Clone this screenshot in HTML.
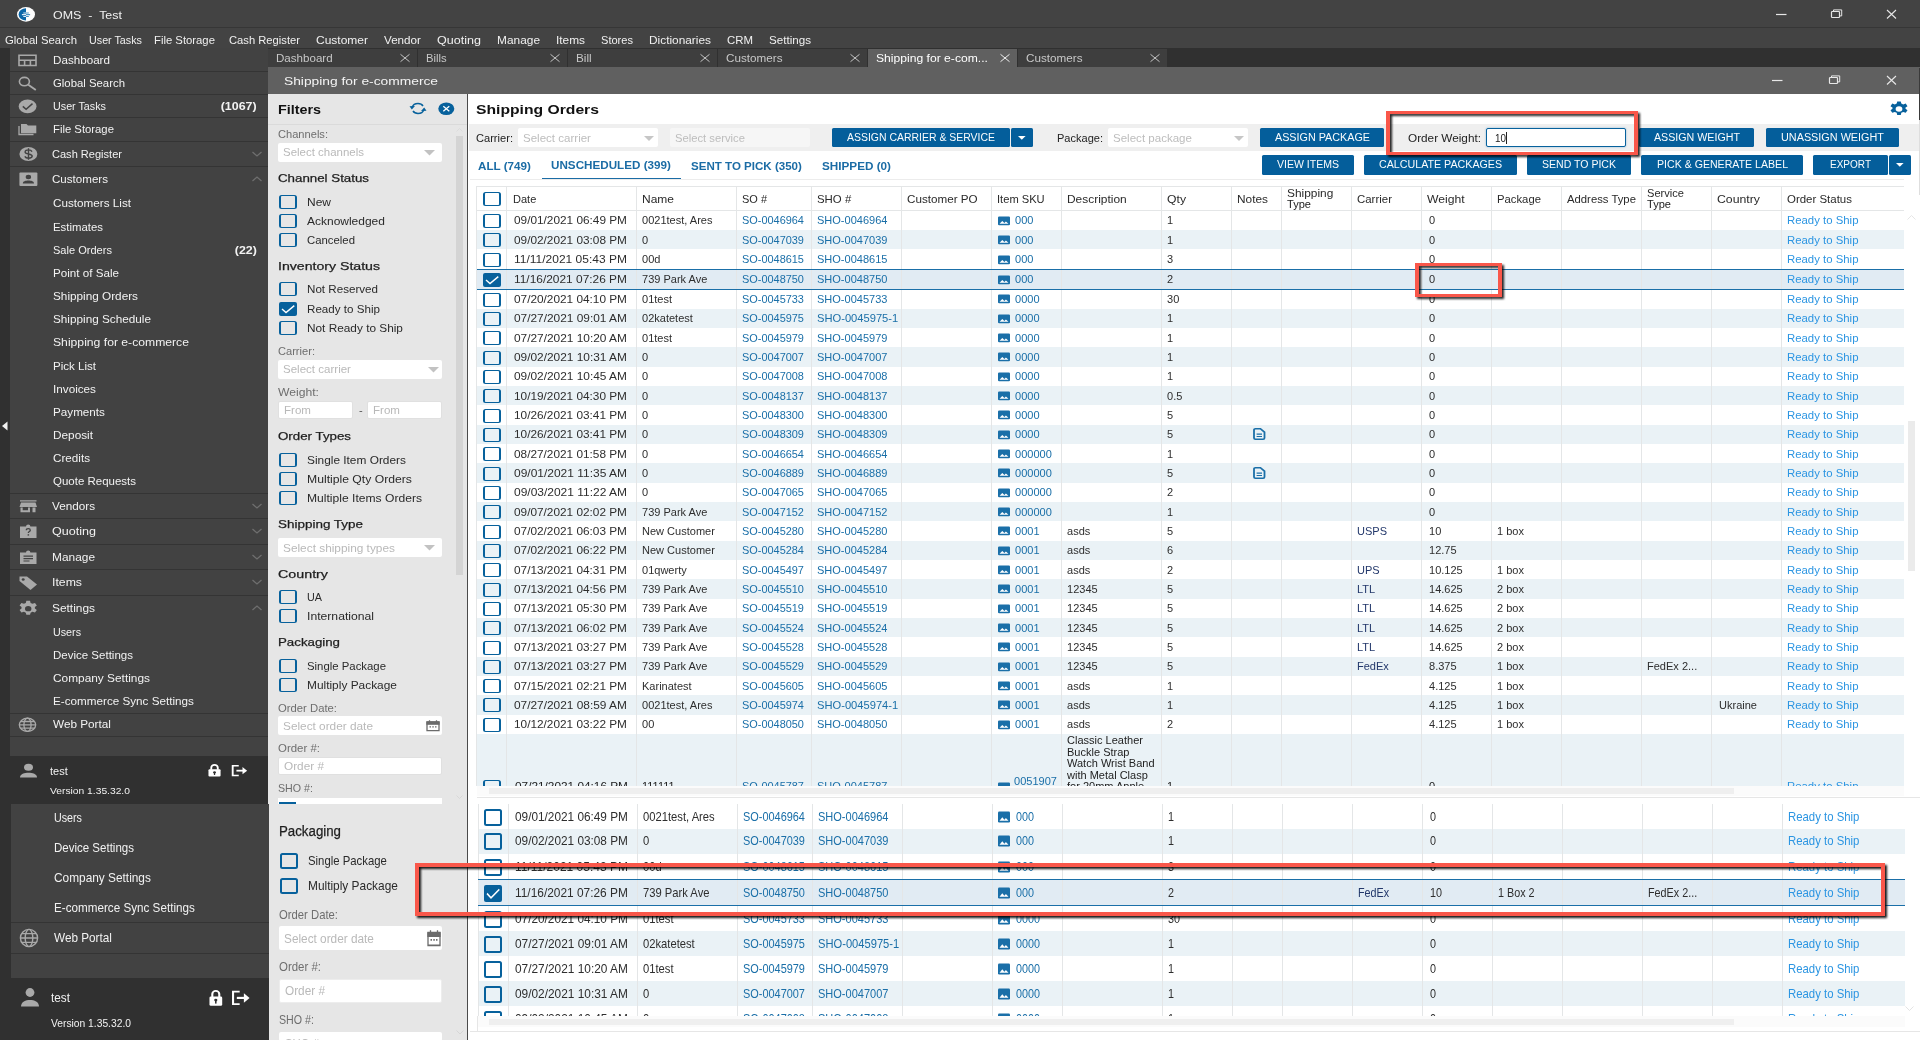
<!DOCTYPE html>
<html><head><meta charset="utf-8"><title>OMS - Test</title>
<style>
html,body{margin:0;padding:0;}
body{width:1920px;height:1040px;overflow:hidden;position:relative;background:#fff;font-family:"Liberation Sans",sans-serif;}
.t{position:absolute;white-space:pre;}
.r{position:absolute;}
svg{position:absolute;overflow:visible;}
.clip{position:absolute;overflow:hidden;}
</style></head><body>
<div id="root" style="position:absolute;left:0;top:0;width:1920px;height:1040px;overflow:hidden;background:#fff">
<div class="r" style="left:0px;top:0px;width:1920px;height:28px;background:#434343;"></div>
<div class="r" style="left:0px;top:27px;width:1920px;height:1px;background:#363636;"></div>
<div class="r" style="left:0px;top:28px;width:1920px;height:20px;background:#434343;"></div>
<div class="r" style="left:0px;top:48px;width:1920px;height:20px;background:#303030;"></div>
<svg style="left:17px;top:6.500px" width="18" height="15" viewBox="0 0 18 15"><ellipse cx="9" cy="7.400" rx="9" ry="7.300" fill="#fdfdfd"/><path d="M9 1.200A7.400 6.200 0 0 0 9 13.600z" fill="#0b66a8"/><path d="M6.300 5.400H9v1.100H6.300z M4.900 7.100H9v1.100H4.900z M6.300 9H9v1.100H6.300z" fill="#dbe9f4"/><path d="M9 5.400h2.800v1.100H9z M9 7.100h4.100v1.100H9z M9 9h2.800v1.100H9z" fill="#4d93c4"/></svg>
<div class="t" style="left:53.0px;top:6.5px;font-size:11.5px;line-height:16px;color:#f0f0f0;transform:scaleX(1.083);transform-origin:0 50%;">OMS  -  Test</div>
<svg style="left:0;top:0" width="1920" height="100"><g stroke="#e6e6e6" fill="none" stroke-width="1"><path d="M1776 14.5h10.5" stroke-width="1.2"/><rect x="1831.5" y="11.5" width="8" height="6" rx="0.8" stroke-width="1.2"/><path d="M1833.5 11.5v-1.6h8.2v6h-2" stroke-width="1"/><path d="M1887 10l9 8.5M1896 10l-9 8.5" stroke-width="1.1"/></g></svg>
<div class="t" style="left:5.0px;top:32.0px;font-size:10.6px;line-height:16px;color:#f0f0f0;transform:scaleX(1.072);transform-origin:0 50%;">Global Search</div>
<div class="t" style="left:89.0px;top:32.0px;font-size:10.6px;line-height:16px;color:#f0f0f0;transform:scaleX(1.015);transform-origin:0 50%;">User Tasks</div>
<div class="t" style="left:154.0px;top:32.0px;font-size:10.6px;line-height:16px;color:#f0f0f0;transform:scaleX(1.067);transform-origin:0 50%;">File Storage</div>
<div class="t" style="left:229.0px;top:32.0px;font-size:10.6px;line-height:16px;color:#f0f0f0;transform:scaleX(1.057);transform-origin:0 50%;">Cash Register</div>
<div class="t" style="left:316.0px;top:32.0px;font-size:10.6px;line-height:16px;color:#f0f0f0;transform:scaleX(1.132);transform-origin:0 50%;">Customer</div>
<div class="t" style="left:384.0px;top:32.0px;font-size:10.6px;line-height:16px;color:#f0f0f0;transform:scaleX(1.101);transform-origin:0 50%;">Vendor</div>
<div class="t" style="left:437.0px;top:32.0px;font-size:10.6px;line-height:16px;color:#f0f0f0;transform:scaleX(1.185);transform-origin:0 50%;">Quoting</div>
<div class="t" style="left:497.0px;top:32.0px;font-size:10.6px;line-height:16px;color:#f0f0f0;transform:scaleX(1.123);transform-origin:0 50%;">Manage</div>
<div class="t" style="left:556.0px;top:32.0px;font-size:10.6px;line-height:16px;color:#f0f0f0;transform:scaleX(1.119);transform-origin:0 50%;">Items</div>
<div class="t" style="left:601.0px;top:32.0px;font-size:10.6px;line-height:16px;color:#f0f0f0;transform:scaleX(1.045);transform-origin:0 50%;">Stores</div>
<div class="t" style="left:649.0px;top:32.0px;font-size:10.6px;line-height:16px;color:#f0f0f0;transform:scaleX(1.120);transform-origin:0 50%;">Dictionaries</div>
<div class="t" style="left:727.0px;top:32.0px;font-size:10.6px;line-height:16px;color:#f0f0f0;transform:scaleX(1.077);transform-origin:0 50%;">CRM</div>
<div class="t" style="left:769.0px;top:32.0px;font-size:10.6px;line-height:16px;color:#f0f0f0;transform:scaleX(1.097);transform-origin:0 50%;">Settings</div>
<div class="r" style="left:268px;top:49px;width:149px;height:18px;background:#3e3e3e;"></div>
<div class="t" style="left:276.0px;top:50.3px;font-size:10.6px;line-height:16px;color:#c8c8c8;transform:scaleX(1.093);transform-origin:0 50%;">Dashboard</div>
<svg style="left:400px;top:53.700px" width="10" height="8"><path d="M0.500 0.300l9 7.400M9.500 0.300l-9 7.400" stroke="#c4c4c4" stroke-width="1" fill="none"/></svg>
<div class="r" style="left:418px;top:49px;width:149px;height:18px;background:#3e3e3e;"></div>
<div class="t" style="left:426.0px;top:50.3px;font-size:10.6px;line-height:16px;color:#c8c8c8;transform:scaleX(1.065);transform-origin:0 50%;">Bills</div>
<svg style="left:550px;top:53.700px" width="10" height="8"><path d="M0.500 0.300l9 7.400M9.500 0.300l-9 7.400" stroke="#c4c4c4" stroke-width="1" fill="none"/></svg>
<div class="r" style="left:568px;top:49px;width:149px;height:18px;background:#3e3e3e;"></div>
<div class="t" style="left:576.0px;top:50.3px;font-size:10.6px;line-height:16px;color:#c8c8c8;transform:scaleX(1.111);transform-origin:0 50%;">Bill</div>
<svg style="left:700px;top:53.700px" width="10" height="8"><path d="M0.500 0.300l9 7.400M9.500 0.300l-9 7.400" stroke="#c4c4c4" stroke-width="1" fill="none"/></svg>
<div class="r" style="left:718px;top:49px;width:149px;height:18px;background:#3e3e3e;"></div>
<div class="t" style="left:726.0px;top:50.3px;font-size:10.6px;line-height:16px;color:#c8c8c8;transform:scaleX(1.103);transform-origin:0 50%;">Customers</div>
<svg style="left:850px;top:53.700px" width="10" height="8"><path d="M0.500 0.300l9 7.400M9.500 0.300l-9 7.400" stroke="#c4c4c4" stroke-width="1" fill="none"/></svg>
<div class="r" style="left:868px;top:49px;width:149px;height:18px;background:#606060;"></div>
<div class="t" style="left:876.0px;top:50.3px;font-size:10.6px;line-height:16px;color:#ffffff;transform:scaleX(1.145);transform-origin:0 50%;">Shipping for e-com...</div>
<svg style="left:1000px;top:53.700px" width="10" height="8"><path d="M0.500 0.300l9 7.400M9.500 0.300l-9 7.400" stroke="#f0f0f0" stroke-width="1" fill="none"/></svg>
<div class="r" style="left:1018px;top:49px;width:149px;height:18px;background:#3e3e3e;"></div>
<div class="t" style="left:1026.0px;top:50.3px;font-size:10.6px;line-height:16px;color:#c8c8c8;transform:scaleX(1.103);transform-origin:0 50%;">Customers</div>
<svg style="left:1150px;top:53.700px" width="10" height="8"><path d="M0.500 0.300l9 7.400M9.500 0.300l-9 7.400" stroke="#c4c4c4" stroke-width="1" fill="none"/></svg>
<div class="r" style="left:268px;top:67px;width:1652px;height:27px;background:#606060;"></div>
<div class="t" style="left:284.0px;top:73.2px;font-size:11.5px;line-height:16px;color:#f4f4f4;transform:scaleX(1.199);transform-origin:0 50%;">Shipping for e-commerce</div>
<svg style="left:0;top:0" width="1920" height="100"><g stroke="#e8e8e8" fill="none" stroke-width="1"><path d="M1772 80.5h10.5" stroke-width="1.2"/><rect x="1829.5" y="77.5" width="8" height="6" rx="0.8" stroke-width="1.2"/><path d="M1831.5 77.5v-1.6h8.2v6h-2" stroke-width="1"/><path d="M1887 76l9 8.5M1896 76l-9 8.5" stroke-width="1.1"/></g></svg>
<div class="r" style="left:0px;top:48px;width:10px;height:992px;background:#303030;"></div>
<div class="r" style="left:10px;top:48px;width:258px;height:756px;background:#424242;"></div>
<svg style="left:1px;top:421px" width="8" height="10"><path d="M6.5 0.5v9l-5.5-4.5z" fill="#f0f0f0"/></svg>
<svg style="left:18px;top:51px" width="21" height="18"><path d="M1 4.200h17v10.300H1z M1 9.300h17 M6.600 9.300v5 M12.400 9.300v5" fill="none" stroke="#a9a9a9" stroke-width="1.600"/></svg>
<div class="t" style="left:53.0px;top:52.0px;font-size:10.6px;line-height:16px;color:#f2f2f2;transform:scaleX(1.099);transform-origin:0 50%;">Dashboard</div>
<svg style="left:18px;top:74px" width="21" height="18"><ellipse cx="6.400" cy="7.600" rx="5" ry="4.200" fill="none" stroke="#a9a9a9" stroke-width="1.600"/><path d="M10.300 10.800l7.500 5.200" stroke="#a9a9a9" stroke-width="1.900" fill="none"/></svg>
<div class="t" style="left:53.0px;top:75.0px;font-size:10.6px;line-height:16px;color:#f2f2f2;transform:scaleX(1.072);transform-origin:0 50%;">Global Search</div>
<svg style="left:18px;top:97px" width="21" height="18"><ellipse cx="9.600" cy="9.400" rx="8.900" ry="6.900" fill="#a9a9a9"/><path d="M4.800 9.400l3.300 2.800 6.400-5.600" stroke="#424242" stroke-width="1.500" fill="none"/></svg>
<div class="t" style="left:53.0px;top:98.0px;font-size:10.6px;line-height:16px;color:#f2f2f2;transform:scaleX(1.015);transform-origin:0 50%;">User Tasks</div>
<div class="t" style="right:1663.0px;top:98.0px;font-size:10.6px;line-height:16px;color:#f2f2f2;font-weight:bold;transform:scaleX(1.175);transform-origin:100% 50%;">(1067)</div>
<svg style="left:18px;top:120px" width="21" height="18"><path d="M1 6v8.500h14.500" fill="none" stroke="#a9a9a9" stroke-width="1.300"/><path d="M3 4h5.500l1.500 1.500h8.300v7.700H3z" fill="#a9a9a9"/></svg>
<div class="t" style="left:53.0px;top:121.0px;font-size:10.6px;line-height:16px;color:#f2f2f2;transform:scaleX(1.067);transform-origin:0 50%;">File Storage</div>
<svg style="left:18px;top:145px" width="21" height="18"><ellipse cx="10.400" cy="9" rx="9" ry="7" fill="#a9a9a9"/><path d="M14 6.600c-.6-1.100-1.900-1.700-3.500-1.700-2 0-3.400.8-3.400 2 0 2.700 7.100 1.400 7.100 4.200 0 1.300-1.500 2.100-3.600 2.100-1.800 0-3.200-.6-3.800-1.800 M10.500 3.200v11.600" stroke="#424242" stroke-width="1.400" fill="none"/></svg>
<div class="t" style="left:52.0px;top:146.0px;font-size:10.6px;line-height:16px;color:#f2f2f2;transform:scaleX(1.042);transform-origin:0 50%;">Cash Register</div>
<svg style="left:252px;top:151px" width="10" height="6"><path d="M0.5 1l4.5 4 4.5-4" fill="none" stroke="#6e6e6e" stroke-width="1.3"/></svg>
<svg style="left:18px;top:170px" width="21" height="18"><rect x="1.400" y="2.400" width="18" height="13.600" rx="1" fill="#a9a9a9"/><ellipse cx="10.400" cy="7" rx="2.700" ry="2.200" fill="#424242"/><path d="M4.800 13.600c0-2.300 2.800-3 5.600-3s5.600.7 5.600 3z" fill="#424242"/></svg>
<div class="t" style="left:52.0px;top:171.0px;font-size:10.6px;line-height:16px;color:#f2f2f2;transform:scaleX(1.093);transform-origin:0 50%;">Customers</div>
<svg style="left:252px;top:176px" width="10" height="6"><path d="M0.5 5l4.5-4 4.5 4" fill="none" stroke="#6e6e6e" stroke-width="1.3"/></svg>
<div class="r" style="left:10px;top:71px;width:258px;height:1px;background:#343434;"></div>
<div class="r" style="left:10px;top:94px;width:258px;height:1px;background:#343434;"></div>
<div class="r" style="left:10px;top:117px;width:258px;height:1px;background:#343434;"></div>
<div class="r" style="left:10px;top:141px;width:258px;height:1px;background:#343434;"></div>
<div class="r" style="left:10px;top:166px;width:258px;height:1px;background:#343434;"></div>
<div class="t" style="left:53.0px;top:195.0px;font-size:10.6px;line-height:16px;color:#f2f2f2;transform:scaleX(1.104);transform-origin:0 50%;">Customers List</div>
<div class="t" style="left:53.0px;top:219.0px;font-size:10.6px;line-height:16px;color:#f2f2f2;transform:scaleX(1.074);transform-origin:0 50%;">Estimates</div>
<div class="t" style="left:53.0px;top:242.0px;font-size:10.6px;line-height:16px;color:#f2f2f2;transform:scaleX(1.043);transform-origin:0 50%;">Sale Orders</div>
<div class="t" style="left:53.0px;top:265.0px;font-size:10.6px;line-height:16px;color:#f2f2f2;transform:scaleX(1.098);transform-origin:0 50%;">Point of Sale</div>
<div class="t" style="left:53.0px;top:288.0px;font-size:10.6px;line-height:16px;color:#f2f2f2;transform:scaleX(1.110);transform-origin:0 50%;">Shipping Orders</div>
<div class="t" style="left:53.0px;top:311.0px;font-size:10.6px;line-height:16px;color:#f2f2f2;transform:scaleX(1.109);transform-origin:0 50%;">Shipping Schedule</div>
<div class="t" style="left:53.0px;top:334.0px;font-size:10.6px;line-height:16px;color:#f2f2f2;transform:scaleX(1.149);transform-origin:0 50%;">Shipping for e-commerce</div>
<div class="t" style="left:53.0px;top:358.0px;font-size:10.6px;line-height:16px;color:#f2f2f2;transform:scaleX(1.090);transform-origin:0 50%;">Pick List</div>
<div class="t" style="left:53.0px;top:381.0px;font-size:10.6px;line-height:16px;color:#f2f2f2;transform:scaleX(1.106);transform-origin:0 50%;">Invoices</div>
<div class="t" style="left:53.0px;top:404.0px;font-size:10.6px;line-height:16px;color:#f2f2f2;transform:scaleX(1.103);transform-origin:0 50%;">Payments</div>
<div class="t" style="left:53.0px;top:427.0px;font-size:10.6px;line-height:16px;color:#f2f2f2;transform:scaleX(1.113);transform-origin:0 50%;">Deposit</div>
<div class="t" style="left:53.0px;top:450.0px;font-size:10.6px;line-height:16px;color:#f2f2f2;transform:scaleX(1.102);transform-origin:0 50%;">Credits</div>
<div class="t" style="left:53.0px;top:473.0px;font-size:10.6px;line-height:16px;color:#f2f2f2;transform:scaleX(1.084);transform-origin:0 50%;">Quote Requests</div>
<div class="t" style="right:1663.0px;top:242.0px;font-size:10.6px;line-height:16px;color:#f2f2f2;font-weight:bold;transform:scaleX(1.167);transform-origin:100% 50%;">(22)</div>
<svg style="left:18px;top:497px" width="21" height="18"><path d="M2 3.200h16.500v1.300H2z M3 5.400h14.500l1.500 4.600H1.500z M2.500 10.500h2.200v2.800h5.300v-2.800h2v4.700H2.500z M14.500 10.500h3v4.700h-3z" fill="#a9a9a9"/></svg>
<div class="t" style="left:52.0px;top:498.0px;font-size:10.6px;line-height:16px;color:#f2f2f2;transform:scaleX(1.106);transform-origin:0 50%;">Vendors</div>
<svg style="left:252px;top:503px" width="10" height="6"><path d="M0.5 1l4.5 4 4.5-4" fill="none" stroke="#6e6e6e" stroke-width="1.3"/></svg>
<svg style="left:18px;top:522px" width="21" height="18"><path d="M2 4.500h6a2.200 2 0 0 1 4.400 0H18.500v11.500H2z" fill="#a9a9a9"/><path d="M8.300 8.300c0-1 .8-1.600 2-1.600s2 .6 2 1.500c0 1.200-2 1.300-2 2.800" stroke="#424242" stroke-width="1.300" fill="none"/><rect x="9.600" y="12.200" width="1.500" height="1.400" fill="#424242"/></svg>
<div class="t" style="left:52.0px;top:523.0px;font-size:10.6px;line-height:16px;color:#f2f2f2;transform:scaleX(1.185);transform-origin:0 50%;">Quoting</div>
<svg style="left:252px;top:528px" width="10" height="6"><path d="M0.5 1l4.5 4 4.5-4" fill="none" stroke="#6e6e6e" stroke-width="1.3"/></svg>
<svg style="left:18px;top:548px" width="21" height="18"><path d="M2 4.500h6a2.200 2 0 0 1 4.400 0H18.500v11.500H2z" fill="#a9a9a9"/><path d="M5.500 8.200h9.500M5.500 10.600h9.500M5.500 13h6" stroke="#424242" stroke-width="1.200"/></svg>
<div class="t" style="left:52.0px;top:549.0px;font-size:10.6px;line-height:16px;color:#f2f2f2;transform:scaleX(1.123);transform-origin:0 50%;">Manage</div>
<svg style="left:252px;top:554px" width="10" height="6"><path d="M0.5 1l4.5 4 4.5-4" fill="none" stroke="#6e6e6e" stroke-width="1.3"/></svg>
<svg style="left:18px;top:573px" width="21" height="18"><path d="M1.500 3.500h7.500l10 8-6.500 5.500-11-9z" fill="#a9a9a9"/><ellipse cx="5.200" cy="6.500" rx="1.500" ry="1.200" fill="#424242"/></svg>
<div class="t" style="left:52.0px;top:574.0px;font-size:10.6px;line-height:16px;color:#f2f2f2;transform:scaleX(1.158);transform-origin:0 50%;">Items</div>
<svg style="left:252px;top:579px" width="10" height="6"><path d="M0.5 1l4.5 4 4.5-4" fill="none" stroke="#6e6e6e" stroke-width="1.3"/></svg>
<svg style="left:18px;top:599px" width="21" height="18"><g transform="translate(10.200 9.700) scale(1.150 .920)"><path d="M-1.600 -8.600h3.200l.5 2.300 1.600.9 2.200-.8 1.600 2.800-1.700 1.500v1.800l1.700 1.500-1.600 2.800-2.200-.8-1.600.9-.5 2.300h-3.200l-.5-2.300-1.600-.9-2.200.8-1.600-2.800 1.700-1.500v-1.800l-1.700-1.500 1.600-2.800 2.200.8 1.600-.9z" fill="#a9a9a9"/><circle r="2.800" fill="#424242"/></g></svg>
<div class="t" style="left:52.0px;top:600.0px;font-size:10.6px;line-height:16px;color:#f2f2f2;transform:scaleX(1.123);transform-origin:0 50%;">Settings</div>
<svg style="left:252px;top:605px" width="10" height="6"><path d="M0.5 5l4.5-4 4.5 4" fill="none" stroke="#6e6e6e" stroke-width="1.3"/></svg>
<div class="r" style="left:10px;top:493px;width:258px;height:1px;background:#343434;"></div>
<div class="r" style="left:10px;top:518px;width:258px;height:1px;background:#343434;"></div>
<div class="r" style="left:10px;top:544px;width:258px;height:1px;background:#343434;"></div>
<div class="r" style="left:10px;top:569px;width:258px;height:1px;background:#343434;"></div>
<div class="r" style="left:10px;top:595px;width:258px;height:1px;background:#343434;"></div>
<div class="t" style="left:53.0px;top:624.0px;font-size:10.6px;line-height:16px;color:#f2f2f2;transform:scaleX(1.012);transform-origin:0 50%;">Users</div>
<div class="t" style="left:53.0px;top:647.0px;font-size:10.6px;line-height:16px;color:#f2f2f2;transform:scaleX(1.086);transform-origin:0 50%;">Device Settings</div>
<div class="t" style="left:53.0px;top:670.0px;font-size:10.6px;line-height:16px;color:#f2f2f2;transform:scaleX(1.120);transform-origin:0 50%;">Company Settings</div>
<div class="t" style="left:53.0px;top:693.0px;font-size:10.6px;line-height:16px;color:#f2f2f2;transform:scaleX(1.103);transform-origin:0 50%;">E-commerce Sync Settings</div>
<div class="r" style="left:10px;top:713px;width:258px;height:1px;background:#343434;"></div>
<svg style="left:18px;top:715px" width="21" height="18"><g fill="none" stroke="#a9a9a9" stroke-width="1.300"><ellipse cx="9.500" cy="9.800" rx="8.200" ry="6.600"/><ellipse cx="9.500" cy="9.800" rx="3.600" ry="6.600"/><path d="M1.300 9.800h16.400M2.600 6.500h13.800M2.600 13.100h13.800"/></g></svg>
<div class="t" style="left:53.0px;top:716.0px;font-size:10.6px;line-height:16px;color:#f2f2f2;transform:scaleX(1.110);transform-origin:0 50%;">Web Portal</div>
<div class="r" style="left:10px;top:736px;width:258px;height:1px;background:#343434;"></div>
<div class="r" style="left:10px;top:756px;width:258px;height:48px;background:#303030;"></div>
<svg style="left:19px;top:762px" width="19" height="16"><ellipse cx="9.500" cy="5.300" rx="4.500" ry="3.500" fill="#a9a9a9"/><path d="M1 15.500c0-3.600 4.500-4.700 8.500-4.700s8.500 1.100 8.500 4.700z" fill="#a9a9a9"/></svg>
<div class="t" style="left:50.0px;top:763.0px;font-size:10.6px;line-height:16px;color:#f2f2f2;transform:scaleX(1.040);transform-origin:0 50%;">test</div>
<div class="t" style="left:50.0px;top:782.5px;font-size:8.6px;line-height:16px;color:#f2f2f2;transform:scaleX(1.195);transform-origin:0 50%;">Version 1.35.32.0</div>
<svg style="left:208px;top:764px" width="41.0" height="13.0" viewBox="0 0 44 16" preserveAspectRatio="none"><rect x="0.5" y="6.5" width="13" height="9" rx="1.2" fill="#fff"/><path d="M3.5 7V4.500a3.500 3.500 0 0 1 7 0V7" fill="none" stroke="#fff" stroke-width="2"/><circle cx="7" cy="10.300" r="1.500" fill="#303030"/><rect x="6.300" y="10.500" width="1.400" height="3" fill="#303030"/><path d="M33 2.2h-6.500v12h6.500" fill="none" stroke="#fff" stroke-width="2"/><path d="M30.500 8.200h9" stroke="#fff" stroke-width="2.200"/><path d="M37 3.800l5 4.400-5 4.400z" fill="#fff"/></svg>
<div class="r" style="left:268px;top:94px;width:200px;height:710px;background:#e6e6e6;"></div>
<div class="r" style="left:467.3px;top:94px;width:1.2px;height:710px;background:#4a4a4a;"></div>
<div class="r" style="left:468.5px;top:94px;width:1452px;height:946px;background:#ffffff;"></div>
<div class="t" style="left:278.0px;top:101.5px;font-size:12px;line-height:16px;color:#111;font-weight:bold;transform:scaleX(1.194);transform-origin:0 50%;">Filters</div>
<div class="r" style="left:268px;top:124px;width:199px;height:1px;background:#dadada;"></div>
<svg style="left:409px;top:101px" width="18" height="15" viewBox="0 0 18 15"><g fill="none" stroke="#07619c" stroke-width="1.5"><path d="M3.2 6.300C4 3.800 6.300 2.600 9 2.600c2.200 0 4 .8 5 2.400"/><path d="M14.800 8.700C14 11.200 11.700 12.400 9 12.400c-2.200 0-4-.8-5-2.400"/></g><path d="M0.500 5.200l5.500-.3-3.200 3.500z M17.500 9.800l-5.500.3 3.200-3.500z" fill="#07619c"/></svg>
<svg style="left:438px;top:102px" width="17" height="14" viewBox="0 0 17 14"><ellipse cx="8.300" cy="6.700" rx="8" ry="6.300" fill="#07619c"/><path d="M5.300 4.200l6 5M11.300 4.200l-6 5" stroke="#fff" stroke-width="1.300"/></svg>
<div class="r" style="left:456px;top:136px;width:7px;height:439px;background:#d4d4d4;"></div>
<svg style="left:456px;top:128px" width="7" height="4"><path d="M0.500 3.500l3-3 3 3" fill="none" stroke="#dcdcdc" stroke-width="1"/></svg>
<svg style="left:456px;top:795px" width="7" height="4"><path d="M0.500 0.500l3 3 3-3" fill="none" stroke="#d8d8d8" stroke-width="1"/></svg>
<div class="t" style="left:278.0px;top:126.0px;font-size:10.6px;line-height:16px;color:#6e6e6e;transform:scaleX(1.048);transform-origin:0 50%;">Channels:</div>
<div class="r" style="left:278px;top:142.5px;width:164px;height:19px;background:#fff;border-radius:2px;"></div>
<div class="t" style="left:283.0px;top:144.0px;font-size:10.6px;line-height:16px;color:#b9b9b9;transform:scaleX(1.082);transform-origin:0 50%;">Select channels</div>
<svg style="left:424px;top:149.5px" width="11" height="6"><path d="M0 0h11l-5.500 5.500z" fill="#c2c2c2"/></svg>
<div class="t" style="left:278.0px;top:170.0px;font-size:11px;line-height:16px;color:#1e1e1e;transform:scaleX(1.210);transform-origin:0 50%;-webkit-text-stroke:0.250px #1e1e1e;">Channel Status</div>
<div class="r" style="left:279px;top:194.5px;width:18px;height:14px;box-sizing:border-box;border:solid #07619c;border-width:1.5px 2px;border-radius:2.500px;background:transparent;"></div>
<div class="t" style="left:307.0px;top:193.5px;font-size:10.6px;line-height:16px;color:#2a2a2a;transform:scaleX(1.132);transform-origin:0 50%;">New</div>
<div class="r" style="left:279px;top:213.5px;width:18px;height:14px;box-sizing:border-box;border:solid #07619c;border-width:1.5px 2px;border-radius:2.500px;background:transparent;"></div>
<div class="t" style="left:307.0px;top:212.5px;font-size:10.6px;line-height:16px;color:#2a2a2a;transform:scaleX(1.131);transform-origin:0 50%;">Acknowledged</div>
<div class="r" style="left:279px;top:233.0px;width:18px;height:14px;box-sizing:border-box;border:solid #07619c;border-width:1.5px 2px;border-radius:2.500px;background:transparent;"></div>
<div class="t" style="left:307.0px;top:232.0px;font-size:10.6px;line-height:16px;color:#2a2a2a;transform:scaleX(1.072);transform-origin:0 50%;">Canceled</div>
<div class="t" style="left:278.0px;top:258.0px;font-size:11px;line-height:16px;color:#1e1e1e;transform:scaleX(1.283);transform-origin:0 50%;-webkit-text-stroke:0.250px #1e1e1e;">Inventory Status</div>
<div class="r" style="left:279px;top:282.0px;width:18px;height:14px;box-sizing:border-box;border:solid #07619c;border-width:1.5px 2px;border-radius:2.500px;background:transparent;"></div>
<div class="t" style="left:307.0px;top:281.0px;font-size:10.6px;line-height:16px;color:#2a2a2a;transform:scaleX(1.096);transform-origin:0 50%;">Not Reserved</div>
<div class="r" style="left:279px;top:301.5px;width:18px;height:14px;background:#07619c;border-radius:2px;"></div>
<svg style="left:279px;top:301.5px" width="18" height="14" viewBox="0 0 18 14" preserveAspectRatio="none"><path d="M3 7l4 3.600 8.300-7" fill="none" stroke="#fff" stroke-width="1.400"/></svg>
<div class="t" style="left:307.0px;top:300.5px;font-size:10.6px;line-height:16px;color:#2a2a2a;transform:scaleX(1.096);transform-origin:0 50%;">Ready to Ship</div>
<div class="r" style="left:279px;top:321.0px;width:18px;height:14px;box-sizing:border-box;border:solid #07619c;border-width:1.5px 2px;border-radius:2.500px;background:transparent;"></div>
<div class="t" style="left:307.0px;top:320.0px;font-size:10.6px;line-height:16px;color:#2a2a2a;transform:scaleX(1.116);transform-origin:0 50%;">Not Ready to Ship</div>
<div class="t" style="left:278.0px;top:343.0px;font-size:10.6px;line-height:16px;color:#6e6e6e;transform:scaleX(1.047);transform-origin:0 50%;">Carrier:</div>
<div class="r" style="left:278px;top:359.5px;width:164px;height:19px;background:#fff;border-radius:2px;"></div>
<div class="t" style="left:283.0px;top:361.0px;font-size:10.6px;line-height:16px;color:#b9b9b9;transform:scaleX(1.089);transform-origin:0 50%;">Select carrier</div>
<svg style="left:428px;top:366.5px" width="11" height="6"><path d="M0 0h11l-5.500 5.500z" fill="#c2c2c2"/></svg>
<div class="t" style="left:278.0px;top:383.5px;font-size:10.6px;line-height:16px;color:#6e6e6e;transform:scaleX(1.147);transform-origin:0 50%;">Weight:</div>
<div class="r" style="left:278px;top:401px;width:75px;height:18px;background:#fff;border:1px solid #e0e0e0;box-sizing:border-box;border-radius:2px;"></div>
<div class="t" style="left:284.0px;top:402.0px;font-size:10.6px;line-height:16px;color:#b9b9b9;transform:scaleX(1.092);transform-origin:0 50%;">From</div>
<div class="r" style="left:367px;top:401px;width:75px;height:18px;background:#fff;border:1px solid #e0e0e0;box-sizing:border-box;border-radius:2px;"></div>
<div class="t" style="left:373.0px;top:402.0px;font-size:10.6px;line-height:16px;color:#b9b9b9;transform:scaleX(1.092);transform-origin:0 50%;">From</div>
<div class="t" style="left:358.5px;top:402.0px;font-size:10.6px;line-height:16px;color:#555;transform:scaleX(1.040);transform-origin:0 50%;">-</div>
<div class="t" style="left:278.0px;top:428.0px;font-size:11px;line-height:16px;color:#1e1e1e;transform:scaleX(1.210);transform-origin:0 50%;-webkit-text-stroke:0.250px #1e1e1e;">Order Types</div>
<div class="r" style="left:279px;top:452.5px;width:18px;height:14px;box-sizing:border-box;border:solid #07619c;border-width:1.5px 2px;border-radius:2.500px;background:transparent;"></div>
<div class="t" style="left:307.0px;top:451.5px;font-size:10.6px;line-height:16px;color:#2a2a2a;transform:scaleX(1.120);transform-origin:0 50%;">Single Item Orders</div>
<div class="r" style="left:279px;top:471.5px;width:18px;height:14px;box-sizing:border-box;border:solid #07619c;border-width:1.5px 2px;border-radius:2.500px;background:transparent;"></div>
<div class="t" style="left:307.0px;top:470.5px;font-size:10.6px;line-height:16px;color:#2a2a2a;transform:scaleX(1.150);transform-origin:0 50%;">Multiple Qty Orders</div>
<div class="r" style="left:279px;top:491.0px;width:18px;height:14px;box-sizing:border-box;border:solid #07619c;border-width:1.5px 2px;border-radius:2.500px;background:transparent;"></div>
<div class="t" style="left:307.0px;top:490.0px;font-size:10.6px;line-height:16px;color:#2a2a2a;transform:scaleX(1.142);transform-origin:0 50%;">Multiple Items Orders</div>
<div class="t" style="left:278.0px;top:516.0px;font-size:11px;line-height:16px;color:#1e1e1e;transform:scaleX(1.223);transform-origin:0 50%;-webkit-text-stroke:0.250px #1e1e1e;">Shipping Type</div>
<div class="r" style="left:278px;top:538.0px;width:164px;height:19px;background:#fff;border-radius:2px;"></div>
<div class="t" style="left:283.0px;top:539.5px;font-size:10.6px;line-height:16px;color:#b9b9b9;transform:scaleX(1.118);transform-origin:0 50%;">Select shipping types</div>
<svg style="left:424px;top:545.0px" width="11" height="6"><path d="M0 0h11l-5.500 5.500z" fill="#c2c2c2"/></svg>
<div class="t" style="left:278.0px;top:565.5px;font-size:11px;line-height:16px;color:#1e1e1e;transform:scaleX(1.298);transform-origin:0 50%;-webkit-text-stroke:0.250px #1e1e1e;">Country</div>
<div class="r" style="left:279px;top:589.5px;width:18px;height:14px;box-sizing:border-box;border:solid #07619c;border-width:1.5px 2px;border-radius:2.500px;background:transparent;"></div>
<div class="t" style="left:307.0px;top:588.5px;font-size:10.6px;line-height:16px;color:#2a2a2a;transform:scaleX(1.019);transform-origin:0 50%;">UA</div>
<div class="r" style="left:279px;top:609.0px;width:18px;height:14px;box-sizing:border-box;border:solid #07619c;border-width:1.5px 2px;border-radius:2.500px;background:transparent;"></div>
<div class="t" style="left:307.0px;top:608.0px;font-size:10.6px;line-height:16px;color:#2a2a2a;transform:scaleX(1.149);transform-origin:0 50%;">International</div>
<div class="t" style="left:278.0px;top:634.0px;font-size:11px;line-height:16px;color:#1e1e1e;transform:scaleX(1.207);transform-origin:0 50%;-webkit-text-stroke:0.250px #1e1e1e;">Packaging</div>
<div class="r" style="left:279px;top:658.5px;width:18px;height:14px;box-sizing:border-box;border:solid #07619c;border-width:1.5px 2px;border-radius:2.500px;background:transparent;"></div>
<div class="t" style="left:307.0px;top:657.5px;font-size:10.6px;line-height:16px;color:#2a2a2a;transform:scaleX(1.073);transform-origin:0 50%;">Single Package</div>
<div class="r" style="left:279px;top:678.0px;width:18px;height:14px;box-sizing:border-box;border:solid #07619c;border-width:1.5px 2px;border-radius:2.500px;background:transparent;"></div>
<div class="t" style="left:307.0px;top:677.0px;font-size:10.6px;line-height:16px;color:#2a2a2a;transform:scaleX(1.123);transform-origin:0 50%;">Multiply Package</div>
<div class="t" style="left:278.0px;top:699.5px;font-size:10.6px;line-height:16px;color:#6e6e6e;transform:scaleX(1.066);transform-origin:0 50%;">Order Date:</div>
<div class="r" style="left:278px;top:716px;width:164px;height:19px;background:#fff;border-radius:2px;"></div>
<div class="t" style="left:283.0px;top:717.5px;font-size:10.6px;line-height:16px;color:#b9b9b9;transform:scaleX(1.115);transform-origin:0 50%;">Select order date</div>
<svg style="left:426px;top:719.5px" width="14.0" height="11.049999999999999" viewBox="0 0 14 13" preserveAspectRatio="none"><path d="M1 2.500h12v10H1z" fill="none" stroke="#6b6b6b" stroke-width="1.300"/><path d="M1 2h12v3H1z M3.500 0.300v2.500 M10.500 0.300v2.500" stroke="#6b6b6b" stroke-width="1.300" fill="#6b6b6b"/><path d="M3.500 8h1.500M6.300 8h1.500M9 8h1.500" stroke="#6b6b6b" stroke-width="1.400"/></svg>
<div class="t" style="left:278.0px;top:739.5px;font-size:10.6px;line-height:16px;color:#6e6e6e;transform:scaleX(1.080);transform-origin:0 50%;">Order #:</div>
<div class="r" style="left:278px;top:757px;width:164px;height:18px;background:#fff;border:1px solid #e0e0e0;box-sizing:border-box;border-radius:2px;"></div>
<div class="t" style="left:284.0px;top:758.0px;font-size:10.6px;line-height:16px;color:#b9b9b9;transform:scaleX(1.113);transform-origin:0 50%;">Order #</div>
<div class="t" style="left:278.0px;top:780.0px;font-size:10.6px;line-height:16px;color:#6e6e6e;transform:scaleX(1.007);transform-origin:0 50%;">SHO #:</div>
<div class="r" style="left:278px;top:798px;width:164px;height:6px;background:#fff;"></div>
<div class="r" style="left:279px;top:802px;width:17px;height:2px;background:#07619c;"></div>
<div class="t" style="left:476.0px;top:101.5px;font-size:12px;line-height:16px;color:#111;font-weight:bold;transform:scaleX(1.308);transform-origin:0 50%;">Shipping Orders</div>
<svg style="left:1889px;top:101px" width="20" height="16" viewBox="-10 -8 20 16"><g transform="scale(1.05 .84)"><path d="M-1.700 -9h3.400l.5 2.500 1.800 1 2.400-.9 1.700 3-1.900 1.600v1.600l1.900 1.600-1.700 3-2.400-.9-1.800 1-.5 2.500h-3.400l-.5-2.500-1.800-1-2.400.9-1.700-3 1.900-1.600v-1.600l-1.900-1.600 1.700-3 2.400.9 1.800-1z" fill="#07619c"/><circle r="3.200" fill="#fff"/></g></svg>
<div class="r" style="left:469px;top:124px;width:1450px;height:26.7px;background:#efefef;"></div>
<div class="t" style="left:476.0px;top:129.5px;font-size:10.6px;line-height:16px;color:#222;transform:scaleX(1.047);transform-origin:0 50%;">Carrier:</div>
<div class="r" style="left:518px;top:128px;width:140px;height:19px;background:#fff;border-radius:2px;"></div>
<div class="t" style="left:523.0px;top:129.5px;font-size:10.6px;line-height:16px;color:#bdbdbd;transform:scaleX(1.089);transform-origin:0 50%;">Select carrier</div>
<svg style="left:644px;top:135.5px" width="10" height="5"><path d="M0 0h10l-5 5z" fill="#c6c6c6"/></svg>
<div class="r" style="left:670px;top:128px;width:140px;height:19px;background:#f6f6f6;border-radius:2px;"></div>
<div class="t" style="left:675.0px;top:129.5px;font-size:10.6px;line-height:16px;color:#bdbdbd;transform:scaleX(1.061);transform-origin:0 50%;">Select service</div>
<div class="r" style="left:832px;top:127.7px;width:178px;height:19.200000000000003px;background:#045e9b;border-radius:1.500px;"></div>
<div class="t" style="left:847.0px;top:129.6px;font-size:10px;line-height:16px;color:#fafcfd;transform:scaleX(1.046);transform-origin:0 50%;">ASSIGN CARRIER &amp; SERVICE</div>
<div class="r" style="left:1011px;top:127.7px;width:22px;height:19.200000000000003px;background:#045e9b;border-radius:1.500px;"></div>
<svg style="left:1018.2px;top:135.70000000000002px" width="8" height="4"><path d="M0 0h7.600l-3.800 3.800z" fill="#fff"/></svg>
<div class="t" style="left:1057.0px;top:129.5px;font-size:10.6px;line-height:16px;color:#222;transform:scaleX(1.041);transform-origin:0 50%;">Package:</div>
<div class="r" style="left:1108px;top:128px;width:140px;height:19px;background:#fff;border-radius:2px;"></div>
<div class="t" style="left:1113.0px;top:129.5px;font-size:10.6px;line-height:16px;color:#bdbdbd;transform:scaleX(1.090);transform-origin:0 50%;">Select package</div>
<svg style="left:1234px;top:135.5px" width="10" height="5"><path d="M0 0h10l-5 5z" fill="#c6c6c6"/></svg>
<div class="r" style="left:1260px;top:127.7px;width:124px;height:19.200000000000003px;background:#045e9b;border-radius:1.500px;"></div>
<div class="t" style="left:1274.5px;top:129.6px;font-size:10px;line-height:16px;color:#fafcfd;transform:scaleX(1.077);transform-origin:0 50%;">ASSIGN PACKAGE</div>
<div class="t" style="left:1408.0px;top:129.5px;font-size:10.6px;line-height:16px;color:#222;transform:scaleX(1.110);transform-origin:0 50%;">Order Weight:</div>
<div class="r" style="left:1486px;top:127.5px;width:140px;height:19.5px;background:#fff;box-sizing:border-box;border:1px solid #07619c;border-radius:2px;box-shadow:0 0 2px #7fb2d6;"></div>
<div class="t" style="left:1495.0px;top:129.5px;font-size:10.6px;line-height:16px;color:#222;transform:scaleX(0.933);transform-origin:0 50%;">10</div>
<div class="r" style="left:1505.5px;top:132px;width:1px;height:12px;background:#222;"></div>
<div class="r" style="left:1639px;top:127.7px;width:115px;height:19.200000000000003px;background:#045e9b;border-radius:1.500px;"></div>
<div class="t" style="left:1653.5px;top:129.6px;font-size:10px;line-height:16px;color:#fafcfd;transform:scaleX(1.067);transform-origin:0 50%;">ASSIGN WEIGHT</div>
<div class="r" style="left:1766px;top:127.7px;width:133px;height:19.200000000000003px;background:#045e9b;border-radius:1.500px;"></div>
<div class="t" style="left:1781.0px;top:129.6px;font-size:10px;line-height:16px;color:#fafcfd;transform:scaleX(1.084);transform-origin:0 50%;">UNASSIGN WEIGHT</div>
<div class="t" style="left:478.0px;top:157.5px;font-size:10.6px;line-height:16px;color:#1b6ca5;font-weight:bold;transform:scaleX(1.102);transform-origin:0 50%;">ALL (749)</div>
<div class="t" style="left:551.0px;top:157.0px;font-size:10.6px;line-height:16px;color:#1b6ca5;font-weight:bold;transform:scaleX(1.101);transform-origin:0 50%;">UNSCHEDULED (399)</div>
<div class="t" style="left:691.0px;top:157.5px;font-size:10.6px;line-height:16px;color:#1b6ca5;font-weight:bold;transform:scaleX(1.091);transform-origin:0 50%;">SENT TO PICK (350)</div>
<div class="t" style="left:822.0px;top:157.5px;font-size:10.6px;line-height:16px;color:#1b6ca5;font-weight:bold;transform:scaleX(1.105);transform-origin:0 50%;">SHIPPED (0)</div>
<div class="r" style="left:542px;top:178px;width:139px;height:1.5px;background:#1b6ca5;"></div>
<div class="r" style="left:470px;top:179px;width:1434px;height:1px;background:#ececec;"></div>
<div class="r" style="left:1262px;top:155.1px;width:92px;height:19.700000000000017px;background:#045e9b;border-radius:1.500px;"></div>
<div class="t" style="left:1277.0px;top:157.2px;font-size:10px;line-height:16px;color:#fafcfd;transform:scaleX(1.053);transform-origin:0 50%;">VIEW ITEMS</div>
<div class="r" style="left:1364px;top:155.1px;width:153px;height:19.700000000000017px;background:#045e9b;border-radius:1.500px;"></div>
<div class="t" style="left:1379.0px;top:157.2px;font-size:10px;line-height:16px;color:#fafcfd;transform:scaleX(1.068);transform-origin:0 50%;">CALCULATE PACKAGES</div>
<div class="r" style="left:1527px;top:155.1px;width:104px;height:19.700000000000017px;background:#045e9b;border-radius:1.500px;"></div>
<div class="t" style="left:1542.0px;top:157.2px;font-size:10px;line-height:16px;color:#fafcfd;transform:scaleX(1.054);transform-origin:0 50%;">SEND TO PICK</div>
<div class="r" style="left:1641px;top:155.1px;width:162px;height:19.700000000000017px;background:#045e9b;border-radius:1.500px;"></div>
<div class="t" style="left:1656.5px;top:157.2px;font-size:10px;line-height:16px;color:#fafcfd;transform:scaleX(1.059);transform-origin:0 50%;">PICK &amp; GENERATE LABEL</div>
<div class="r" style="left:1813px;top:155.1px;width:75px;height:19.700000000000017px;background:#045e9b;border-radius:1.500px;"></div>
<div class="t" style="left:1830.0px;top:157.2px;font-size:10px;line-height:16px;color:#fafcfd;transform:scaleX(1.002);transform-origin:0 50%;">EXPORT</div>
<div class="r" style="left:1889px;top:155.1px;width:22px;height:19.700000000000017px;background:#045e9b;border-radius:1.500px;"></div>
<svg style="left:1896.2px;top:163.35px" width="8" height="4"><path d="M0 0h7.600l-3.800 3.800z" fill="#fff"/></svg>
<div class="r" style="left:477px;top:186px;width:1427px;height:24.5px;background:#fff;"></div>
<div class="r" style="left:477px;top:186px;width:1427px;height:1px;background:#e4e6e7;"></div>
<div class="r" style="left:477px;top:210px;width:1427px;height:1px;background:#e4e6e7;"></div>
<div class="t" style="left:513.0px;top:192.0px;font-size:10.4px;line-height:16px;color:#2a2a2a;transform:scaleX(1.061);transform-origin:0 50%;">Date</div>
<div class="t" style="left:642.0px;top:192.0px;font-size:10.4px;line-height:16px;color:#2a2a2a;transform:scaleX(1.154);transform-origin:0 50%;">Name</div>
<div class="t" style="left:742.0px;top:192.0px;font-size:10.4px;line-height:16px;color:#2a2a2a;transform:scaleX(1.055);transform-origin:0 50%;">SO #</div>
<div class="t" style="left:817.0px;top:192.0px;font-size:10.4px;line-height:16px;color:#2a2a2a;transform:scaleX(1.099);transform-origin:0 50%;">SHO #</div>
<div class="t" style="left:907.0px;top:192.0px;font-size:10.4px;line-height:16px;color:#2a2a2a;transform:scaleX(1.122);transform-origin:0 50%;">Customer PO</div>
<div class="t" style="left:997.0px;top:192.0px;font-size:10.4px;line-height:16px;color:#2a2a2a;transform:scaleX(1.072);transform-origin:0 50%;">Item SKU</div>
<div class="t" style="left:1067.0px;top:192.0px;font-size:10.4px;line-height:16px;color:#2a2a2a;transform:scaleX(1.148);transform-origin:0 50%;">Description</div>
<div class="t" style="left:1167.0px;top:192.0px;font-size:10.4px;line-height:16px;color:#2a2a2a;transform:scaleX(1.174);transform-origin:0 50%;">Qty</div>
<div class="t" style="left:1237.0px;top:192.0px;font-size:10.4px;line-height:16px;color:#2a2a2a;transform:scaleX(1.141);transform-origin:0 50%;">Notes</div>
<div class="t" style="left:1287.0px;top:185.6px;font-size:10.4px;line-height:16px;color:#2a2a2a;transform:scaleX(1.144);transform-origin:0 50%;">Shipping</div>
<div class="t" style="left:1287.0px;top:197.2px;font-size:10.4px;line-height:16px;color:#222;transform:scaleX(1.065);transform-origin:0 50%;">Type</div>
<div class="t" style="left:1357.0px;top:192.0px;font-size:10.4px;line-height:16px;color:#2a2a2a;transform:scaleX(1.101);transform-origin:0 50%;">Carrier</div>
<div class="t" style="left:1427.0px;top:192.0px;font-size:10.4px;line-height:16px;color:#2a2a2a;transform:scaleX(1.172);transform-origin:0 50%;">Weight</div>
<div class="t" style="left:1497.0px;top:192.0px;font-size:10.4px;line-height:16px;color:#2a2a2a;transform:scaleX(1.087);transform-origin:0 50%;">Package</div>
<div class="t" style="left:1567.0px;top:192.0px;font-size:10.4px;line-height:16px;color:#2a2a2a;transform:scaleX(1.088);transform-origin:0 50%;">Address Type</div>
<div class="t" style="left:1647.0px;top:185.6px;font-size:10.4px;line-height:16px;color:#2a2a2a;transform:scaleX(1.067);transform-origin:0 50%;">Service</div>
<div class="t" style="left:1647.0px;top:197.2px;font-size:10.4px;line-height:16px;color:#222;transform:scaleX(1.065);transform-origin:0 50%;">Type</div>
<div class="t" style="left:1717.0px;top:192.0px;font-size:10.4px;line-height:16px;color:#2a2a2a;transform:scaleX(1.181);transform-origin:0 50%;">Country</div>
<div class="t" style="left:1787.0px;top:192.0px;font-size:10.4px;line-height:16px;color:#2a2a2a;transform:scaleX(1.103);transform-origin:0 50%;">Order Status</div>
<div class="r" style="left:483px;top:191.5px;width:18px;height:14px;box-sizing:border-box;border:solid #07619c;border-width:1.5px 2px;border-radius:2.500px;background:#fff;"></div>
<div class="r" style="left:477px;top:210.8px;width:1427px;height:19.299999999999983px;background:#fff;"></div>
<div class="r" style="left:483px;top:213.95px;width:18px;height:14px;box-sizing:border-box;border:solid #07619c;border-width:1.6px 2px;border-radius:2.500px;background:#fff;"></div>
<div class="t" style="left:514.0px;top:212.4px;font-size:10.6px;line-height:16px;color:#2e2e2e;transform:scaleX(1.115);transform-origin:0 50%;">09/01/2021 06:49 PM</div>
<div class="t" style="left:642.0px;top:212.4px;font-size:10.6px;line-height:16px;color:#2e2e2e;transform:scaleX(1.040);transform-origin:0 50%;">0021test, Ares</div>
<div class="t" style="left:742.0px;top:212.4px;font-size:10.6px;line-height:16px;color:#1a6fa8;transform:scaleX(1.031);transform-origin:0 50%;">SO-0046964</div>
<div class="t" style="left:817.0px;top:212.4px;font-size:10.6px;line-height:16px;color:#1a6fa8;transform:scaleX(1.040);transform-origin:0 50%;">SHO-0046964</div>
<svg style="left:998px;top:215.64999999999998px" width="12.0" height="9.600000000000001" viewBox="0 0 12 12" preserveAspectRatio="none"><rect x="0" y="0.500" width="12" height="11" rx="1.200" fill="#1a6fa8"/><path d="M1.500 9.800l2.800-3.600 2.100 2.500 1.500-1.700 2.600 2.800z" fill="#fff"/></svg>
<div class="t" style="left:1015.0px;top:212.4px;font-size:10.6px;line-height:16px;color:#1a6fa8;transform:scaleX(1.040);transform-origin:0 50%;">000</div>
<div class="t" style="left:1167.0px;top:212.4px;font-size:10.6px;line-height:16px;color:#2e2e2e;transform:scaleX(1.040);transform-origin:0 50%;">1</div>
<div class="t" style="left:1429.0px;top:212.4px;font-size:10.6px;line-height:16px;color:#2e2e2e;transform:scaleX(1.040);transform-origin:0 50%;">0</div>
<div class="t" style="left:1787.0px;top:212.4px;font-size:10.6px;line-height:16px;color:#2b95e2;transform:scaleX(1.074);transform-origin:0 50%;">Ready to Ship</div>
<div class="r" style="left:477px;top:230.1px;width:1427px;height:19.30000000000001px;background:#eaf2f6;"></div>
<div class="r" style="left:483px;top:233.25px;width:18px;height:14px;box-sizing:border-box;border:solid #07619c;border-width:1.6px 2px;border-radius:2.500px;background:#eaf2f6;"></div>
<div class="t" style="left:514.0px;top:231.8px;font-size:10.6px;line-height:16px;color:#2e2e2e;transform:scaleX(1.115);transform-origin:0 50%;">09/02/2021 03:08 PM</div>
<div class="t" style="left:642.0px;top:231.8px;font-size:10.6px;line-height:16px;color:#2e2e2e;transform:scaleX(1.040);transform-origin:0 50%;">0</div>
<div class="t" style="left:742.0px;top:231.8px;font-size:10.6px;line-height:16px;color:#1a6fa8;transform:scaleX(1.031);transform-origin:0 50%;">SO-0047039</div>
<div class="t" style="left:817.0px;top:231.8px;font-size:10.6px;line-height:16px;color:#1a6fa8;transform:scaleX(1.040);transform-origin:0 50%;">SHO-0047039</div>
<svg style="left:998px;top:234.95px" width="12.0" height="9.600000000000001" viewBox="0 0 12 12" preserveAspectRatio="none"><rect x="0" y="0.500" width="12" height="11" rx="1.200" fill="#1a6fa8"/><path d="M1.500 9.800l2.800-3.600 2.100 2.500 1.500-1.700 2.600 2.800z" fill="#fff"/></svg>
<div class="t" style="left:1015.0px;top:231.8px;font-size:10.6px;line-height:16px;color:#1a6fa8;transform:scaleX(1.040);transform-origin:0 50%;">000</div>
<div class="t" style="left:1167.0px;top:231.8px;font-size:10.6px;line-height:16px;color:#2e2e2e;transform:scaleX(1.040);transform-origin:0 50%;">1</div>
<div class="t" style="left:1429.0px;top:231.8px;font-size:10.6px;line-height:16px;color:#2e2e2e;transform:scaleX(1.040);transform-origin:0 50%;">0</div>
<div class="t" style="left:1787.0px;top:231.8px;font-size:10.6px;line-height:16px;color:#2b95e2;transform:scaleX(1.074);transform-origin:0 50%;">Ready to Ship</div>
<div class="r" style="left:477px;top:249.4px;width:1427px;height:19.99999999999997px;background:#fff;"></div>
<div class="r" style="left:483px;top:252.89999999999998px;width:18px;height:14px;box-sizing:border-box;border:solid #07619c;border-width:1.6px 2px;border-radius:2.500px;background:#fff;"></div>
<div class="t" style="left:514.0px;top:251.4px;font-size:10.6px;line-height:16px;color:#2e2e2e;transform:scaleX(1.132);transform-origin:0 50%;">11/11/2021 05:43 PM</div>
<div class="t" style="left:642.0px;top:251.4px;font-size:10.6px;line-height:16px;color:#2e2e2e;transform:scaleX(1.040);transform-origin:0 50%;">00d</div>
<div class="t" style="left:742.0px;top:251.4px;font-size:10.6px;line-height:16px;color:#1a6fa8;transform:scaleX(1.031);transform-origin:0 50%;">SO-0048615</div>
<div class="t" style="left:817.0px;top:251.4px;font-size:10.6px;line-height:16px;color:#1a6fa8;transform:scaleX(1.040);transform-origin:0 50%;">SHO-0048615</div>
<svg style="left:998px;top:254.59999999999997px" width="12.0" height="9.600000000000001" viewBox="0 0 12 12" preserveAspectRatio="none"><rect x="0" y="0.500" width="12" height="11" rx="1.200" fill="#1a6fa8"/><path d="M1.500 9.800l2.800-3.600 2.100 2.500 1.500-1.700 2.600 2.800z" fill="#fff"/></svg>
<div class="t" style="left:1015.0px;top:251.4px;font-size:10.6px;line-height:16px;color:#1a6fa8;transform:scaleX(1.040);transform-origin:0 50%;">000</div>
<div class="t" style="left:1167.0px;top:251.4px;font-size:10.6px;line-height:16px;color:#2e2e2e;transform:scaleX(1.040);transform-origin:0 50%;">3</div>
<div class="t" style="left:1429.0px;top:251.4px;font-size:10.6px;line-height:16px;color:#2e2e2e;transform:scaleX(1.040);transform-origin:0 50%;">0</div>
<div class="t" style="left:1787.0px;top:251.4px;font-size:10.6px;line-height:16px;color:#2b95e2;transform:scaleX(1.074);transform-origin:0 50%;">Ready to Ship</div>
<div class="r" style="left:477px;top:269.4px;width:1427px;height:20.0px;background:#e1ebf3;"></div>
<div class="r" style="left:483px;top:272.9px;width:18px;height:14px;background:#07619c;border-radius:2px;"></div>
<svg style="left:483px;top:272.9px" width="18" height="14" viewBox="0 0 18 14" preserveAspectRatio="none"><path d="M3 7l4 3.600 8.300-7" fill="none" stroke="#fff" stroke-width="1.400"/></svg>
<div class="t" style="left:514.0px;top:271.4px;font-size:10.6px;line-height:16px;color:#2e2e2e;transform:scaleX(1.124);transform-origin:0 50%;">11/16/2021 07:26 PM</div>
<div class="t" style="left:642.0px;top:271.4px;font-size:10.6px;line-height:16px;color:#2e2e2e;transform:scaleX(1.040);transform-origin:0 50%;">739 Park Ave</div>
<div class="t" style="left:742.0px;top:271.4px;font-size:10.6px;line-height:16px;color:#1a6fa8;transform:scaleX(1.031);transform-origin:0 50%;">SO-0048750</div>
<div class="t" style="left:817.0px;top:271.4px;font-size:10.6px;line-height:16px;color:#1a6fa8;transform:scaleX(1.040);transform-origin:0 50%;">SHO-0048750</div>
<svg style="left:998px;top:274.59999999999997px" width="12.0" height="9.600000000000001" viewBox="0 0 12 12" preserveAspectRatio="none"><rect x="0" y="0.500" width="12" height="11" rx="1.200" fill="#1a6fa8"/><path d="M1.500 9.800l2.800-3.600 2.100 2.500 1.500-1.700 2.600 2.800z" fill="#fff"/></svg>
<div class="t" style="left:1015.0px;top:271.4px;font-size:10.6px;line-height:16px;color:#1a6fa8;transform:scaleX(1.040);transform-origin:0 50%;">000</div>
<div class="t" style="left:1167.0px;top:271.4px;font-size:10.6px;line-height:16px;color:#2e2e2e;transform:scaleX(1.040);transform-origin:0 50%;">2</div>
<div class="t" style="left:1429.0px;top:271.4px;font-size:10.6px;line-height:16px;color:#2e2e2e;transform:scaleX(1.040);transform-origin:0 50%;">0</div>
<div class="t" style="left:1787.0px;top:271.4px;font-size:10.6px;line-height:16px;color:#2b95e2;transform:scaleX(1.074);transform-origin:0 50%;">Ready to Ship</div>
<div class="r" style="left:477px;top:289.4px;width:1427px;height:19.33000000000004px;background:#fff;"></div>
<div class="r" style="left:483px;top:292.565px;width:18px;height:14px;box-sizing:border-box;border:solid #07619c;border-width:1.6px 2px;border-radius:2.500px;background:#fff;"></div>
<div class="t" style="left:514.0px;top:291.1px;font-size:10.6px;line-height:16px;color:#2e2e2e;transform:scaleX(1.115);transform-origin:0 50%;">07/20/2021 04:10 PM</div>
<div class="t" style="left:642.0px;top:291.1px;font-size:10.6px;line-height:16px;color:#2e2e2e;transform:scaleX(1.040);transform-origin:0 50%;">01test</div>
<div class="t" style="left:742.0px;top:291.1px;font-size:10.6px;line-height:16px;color:#1a6fa8;transform:scaleX(1.031);transform-origin:0 50%;">SO-0045733</div>
<div class="t" style="left:817.0px;top:291.1px;font-size:10.6px;line-height:16px;color:#1a6fa8;transform:scaleX(1.040);transform-origin:0 50%;">SHO-0045733</div>
<svg style="left:998px;top:294.265px" width="12.0" height="9.600000000000001" viewBox="0 0 12 12" preserveAspectRatio="none"><rect x="0" y="0.500" width="12" height="11" rx="1.200" fill="#1a6fa8"/><path d="M1.500 9.800l2.800-3.600 2.100 2.500 1.500-1.700 2.600 2.800z" fill="#fff"/></svg>
<div class="t" style="left:1015.0px;top:291.1px;font-size:10.6px;line-height:16px;color:#1a6fa8;transform:scaleX(1.040);transform-origin:0 50%;">0000</div>
<div class="t" style="left:1167.0px;top:291.1px;font-size:10.6px;line-height:16px;color:#2e2e2e;transform:scaleX(1.040);transform-origin:0 50%;">30</div>
<div class="t" style="left:1429.0px;top:291.1px;font-size:10.6px;line-height:16px;color:#2e2e2e;transform:scaleX(1.040);transform-origin:0 50%;">0</div>
<div class="t" style="left:1787.0px;top:291.1px;font-size:10.6px;line-height:16px;color:#2b95e2;transform:scaleX(1.074);transform-origin:0 50%;">Ready to Ship</div>
<div class="r" style="left:477px;top:308.73px;width:1427px;height:19.329999999999984px;background:#eaf2f6;"></div>
<div class="r" style="left:483px;top:311.895px;width:18px;height:14px;box-sizing:border-box;border:solid #07619c;border-width:1.6px 2px;border-radius:2.500px;background:#eaf2f6;"></div>
<div class="t" style="left:514.0px;top:310.4px;font-size:10.6px;line-height:16px;color:#2e2e2e;transform:scaleX(1.121);transform-origin:0 50%;">07/27/2021 09:01 AM</div>
<div class="t" style="left:642.0px;top:310.4px;font-size:10.6px;line-height:16px;color:#2e2e2e;transform:scaleX(1.040);transform-origin:0 50%;">02katetest</div>
<div class="t" style="left:742.0px;top:310.4px;font-size:10.6px;line-height:16px;color:#1a6fa8;transform:scaleX(1.031);transform-origin:0 50%;">SO-0045975</div>
<div class="t" style="left:817.0px;top:310.4px;font-size:10.6px;line-height:16px;color:#1a6fa8;transform:scaleX(1.053);transform-origin:0 50%;">SHO-0045975-1</div>
<svg style="left:998px;top:313.59499999999997px" width="12.0" height="9.600000000000001" viewBox="0 0 12 12" preserveAspectRatio="none"><rect x="0" y="0.500" width="12" height="11" rx="1.200" fill="#1a6fa8"/><path d="M1.500 9.800l2.800-3.600 2.100 2.500 1.500-1.700 2.600 2.800z" fill="#fff"/></svg>
<div class="t" style="left:1015.0px;top:310.4px;font-size:10.6px;line-height:16px;color:#1a6fa8;transform:scaleX(1.040);transform-origin:0 50%;">0000</div>
<div class="t" style="left:1167.0px;top:310.4px;font-size:10.6px;line-height:16px;color:#2e2e2e;transform:scaleX(1.040);transform-origin:0 50%;">1</div>
<div class="t" style="left:1429.0px;top:310.4px;font-size:10.6px;line-height:16px;color:#2e2e2e;transform:scaleX(1.040);transform-origin:0 50%;">0</div>
<div class="t" style="left:1787.0px;top:310.4px;font-size:10.6px;line-height:16px;color:#2b95e2;transform:scaleX(1.074);transform-origin:0 50%;">Ready to Ship</div>
<div class="r" style="left:477px;top:328.06px;width:1427px;height:19.329999999999984px;background:#fff;"></div>
<div class="r" style="left:483px;top:331.225px;width:18px;height:14px;box-sizing:border-box;border:solid #07619c;border-width:1.6px 2px;border-radius:2.500px;background:#fff;"></div>
<div class="t" style="left:514.0px;top:329.7px;font-size:10.6px;line-height:16px;color:#2e2e2e;transform:scaleX(1.121);transform-origin:0 50%;">07/27/2021 10:20 AM</div>
<div class="t" style="left:642.0px;top:329.7px;font-size:10.6px;line-height:16px;color:#2e2e2e;transform:scaleX(1.040);transform-origin:0 50%;">01test</div>
<div class="t" style="left:742.0px;top:329.7px;font-size:10.6px;line-height:16px;color:#1a6fa8;transform:scaleX(1.031);transform-origin:0 50%;">SO-0045979</div>
<div class="t" style="left:817.0px;top:329.7px;font-size:10.6px;line-height:16px;color:#1a6fa8;transform:scaleX(1.040);transform-origin:0 50%;">SHO-0045979</div>
<svg style="left:998px;top:332.925px" width="12.0" height="9.600000000000001" viewBox="0 0 12 12" preserveAspectRatio="none"><rect x="0" y="0.500" width="12" height="11" rx="1.200" fill="#1a6fa8"/><path d="M1.500 9.800l2.800-3.600 2.100 2.500 1.500-1.700 2.600 2.800z" fill="#fff"/></svg>
<div class="t" style="left:1015.0px;top:329.7px;font-size:10.6px;line-height:16px;color:#1a6fa8;transform:scaleX(1.040);transform-origin:0 50%;">0000</div>
<div class="t" style="left:1167.0px;top:329.7px;font-size:10.6px;line-height:16px;color:#2e2e2e;transform:scaleX(1.040);transform-origin:0 50%;">1</div>
<div class="t" style="left:1429.0px;top:329.7px;font-size:10.6px;line-height:16px;color:#2e2e2e;transform:scaleX(1.040);transform-origin:0 50%;">0</div>
<div class="t" style="left:1787.0px;top:329.7px;font-size:10.6px;line-height:16px;color:#2b95e2;transform:scaleX(1.074);transform-origin:0 50%;">Ready to Ship</div>
<div class="r" style="left:477px;top:347.39px;width:1427px;height:19.33000000000004px;background:#eaf2f6;"></div>
<div class="r" style="left:483px;top:350.555px;width:18px;height:14px;box-sizing:border-box;border:solid #07619c;border-width:1.6px 2px;border-radius:2.500px;background:#eaf2f6;"></div>
<div class="t" style="left:514.0px;top:349.1px;font-size:10.6px;line-height:16px;color:#2e2e2e;transform:scaleX(1.121);transform-origin:0 50%;">09/02/2021 10:31 AM</div>
<div class="t" style="left:642.0px;top:349.1px;font-size:10.6px;line-height:16px;color:#2e2e2e;transform:scaleX(1.040);transform-origin:0 50%;">0</div>
<div class="t" style="left:742.0px;top:349.1px;font-size:10.6px;line-height:16px;color:#1a6fa8;transform:scaleX(1.031);transform-origin:0 50%;">SO-0047007</div>
<div class="t" style="left:817.0px;top:349.1px;font-size:10.6px;line-height:16px;color:#1a6fa8;transform:scaleX(1.040);transform-origin:0 50%;">SHO-0047007</div>
<svg style="left:998px;top:352.255px" width="12.0" height="9.600000000000001" viewBox="0 0 12 12" preserveAspectRatio="none"><rect x="0" y="0.500" width="12" height="11" rx="1.200" fill="#1a6fa8"/><path d="M1.500 9.800l2.800-3.600 2.100 2.500 1.500-1.700 2.600 2.800z" fill="#fff"/></svg>
<div class="t" style="left:1015.0px;top:349.1px;font-size:10.6px;line-height:16px;color:#1a6fa8;transform:scaleX(1.040);transform-origin:0 50%;">0000</div>
<div class="t" style="left:1167.0px;top:349.1px;font-size:10.6px;line-height:16px;color:#2e2e2e;transform:scaleX(1.040);transform-origin:0 50%;">1</div>
<div class="t" style="left:1429.0px;top:349.1px;font-size:10.6px;line-height:16px;color:#2e2e2e;transform:scaleX(1.040);transform-origin:0 50%;">0</div>
<div class="t" style="left:1787.0px;top:349.1px;font-size:10.6px;line-height:16px;color:#2b95e2;transform:scaleX(1.074);transform-origin:0 50%;">Ready to Ship</div>
<div class="r" style="left:477px;top:366.72px;width:1427px;height:19.329999999999984px;background:#fff;"></div>
<div class="r" style="left:483px;top:369.885px;width:18px;height:14px;box-sizing:border-box;border:solid #07619c;border-width:1.6px 2px;border-radius:2.500px;background:#fff;"></div>
<div class="t" style="left:514.0px;top:368.4px;font-size:10.6px;line-height:16px;color:#2e2e2e;transform:scaleX(1.121);transform-origin:0 50%;">09/02/2021 10:45 AM</div>
<div class="t" style="left:642.0px;top:368.4px;font-size:10.6px;line-height:16px;color:#2e2e2e;transform:scaleX(1.040);transform-origin:0 50%;">0</div>
<div class="t" style="left:742.0px;top:368.4px;font-size:10.6px;line-height:16px;color:#1a6fa8;transform:scaleX(1.031);transform-origin:0 50%;">SO-0047008</div>
<div class="t" style="left:817.0px;top:368.4px;font-size:10.6px;line-height:16px;color:#1a6fa8;transform:scaleX(1.040);transform-origin:0 50%;">SHO-0047008</div>
<svg style="left:998px;top:371.585px" width="12.0" height="9.600000000000001" viewBox="0 0 12 12" preserveAspectRatio="none"><rect x="0" y="0.500" width="12" height="11" rx="1.200" fill="#1a6fa8"/><path d="M1.500 9.800l2.800-3.600 2.100 2.500 1.500-1.700 2.600 2.800z" fill="#fff"/></svg>
<div class="t" style="left:1015.0px;top:368.4px;font-size:10.6px;line-height:16px;color:#1a6fa8;transform:scaleX(1.040);transform-origin:0 50%;">0000</div>
<div class="t" style="left:1167.0px;top:368.4px;font-size:10.6px;line-height:16px;color:#2e2e2e;transform:scaleX(1.040);transform-origin:0 50%;">1</div>
<div class="t" style="left:1429.0px;top:368.4px;font-size:10.6px;line-height:16px;color:#2e2e2e;transform:scaleX(1.040);transform-origin:0 50%;">0</div>
<div class="t" style="left:1787.0px;top:368.4px;font-size:10.6px;line-height:16px;color:#2b95e2;transform:scaleX(1.074);transform-origin:0 50%;">Ready to Ship</div>
<div class="r" style="left:477px;top:386.05px;width:1427px;height:19.329999999999984px;background:#eaf2f6;"></div>
<div class="r" style="left:483px;top:389.21500000000003px;width:18px;height:14px;box-sizing:border-box;border:solid #07619c;border-width:1.6px 2px;border-radius:2.500px;background:#eaf2f6;"></div>
<div class="t" style="left:514.0px;top:387.7px;font-size:10.6px;line-height:16px;color:#2e2e2e;transform:scaleX(1.115);transform-origin:0 50%;">10/19/2021 04:30 PM</div>
<div class="t" style="left:642.0px;top:387.7px;font-size:10.6px;line-height:16px;color:#2e2e2e;transform:scaleX(1.040);transform-origin:0 50%;">0</div>
<div class="t" style="left:742.0px;top:387.7px;font-size:10.6px;line-height:16px;color:#1a6fa8;transform:scaleX(1.031);transform-origin:0 50%;">SO-0048137</div>
<div class="t" style="left:817.0px;top:387.7px;font-size:10.6px;line-height:16px;color:#1a6fa8;transform:scaleX(1.040);transform-origin:0 50%;">SHO-0048137</div>
<svg style="left:998px;top:390.915px" width="12.0" height="9.600000000000001" viewBox="0 0 12 12" preserveAspectRatio="none"><rect x="0" y="0.500" width="12" height="11" rx="1.200" fill="#1a6fa8"/><path d="M1.500 9.800l2.800-3.600 2.100 2.500 1.500-1.700 2.600 2.800z" fill="#fff"/></svg>
<div class="t" style="left:1015.0px;top:387.7px;font-size:10.6px;line-height:16px;color:#1a6fa8;transform:scaleX(1.040);transform-origin:0 50%;">0000</div>
<div class="t" style="left:1167.0px;top:387.7px;font-size:10.6px;line-height:16px;color:#2e2e2e;transform:scaleX(1.040);transform-origin:0 50%;">0.5</div>
<div class="t" style="left:1429.0px;top:387.7px;font-size:10.6px;line-height:16px;color:#2e2e2e;transform:scaleX(1.040);transform-origin:0 50%;">0</div>
<div class="t" style="left:1787.0px;top:387.7px;font-size:10.6px;line-height:16px;color:#2b95e2;transform:scaleX(1.074);transform-origin:0 50%;">Ready to Ship</div>
<div class="r" style="left:477px;top:405.38px;width:1427px;height:19.329999999999984px;background:#fff;"></div>
<div class="r" style="left:483px;top:408.54499999999996px;width:18px;height:14px;box-sizing:border-box;border:solid #07619c;border-width:1.6px 2px;border-radius:2.500px;background:#fff;"></div>
<div class="t" style="left:514.0px;top:407.0px;font-size:10.6px;line-height:16px;color:#2e2e2e;transform:scaleX(1.115);transform-origin:0 50%;">10/26/2021 03:41 PM</div>
<div class="t" style="left:642.0px;top:407.0px;font-size:10.6px;line-height:16px;color:#2e2e2e;transform:scaleX(1.040);transform-origin:0 50%;">0</div>
<div class="t" style="left:742.0px;top:407.0px;font-size:10.6px;line-height:16px;color:#1a6fa8;transform:scaleX(1.031);transform-origin:0 50%;">SO-0048300</div>
<div class="t" style="left:817.0px;top:407.0px;font-size:10.6px;line-height:16px;color:#1a6fa8;transform:scaleX(1.040);transform-origin:0 50%;">SHO-0048300</div>
<svg style="left:998px;top:410.24499999999995px" width="12.0" height="9.600000000000001" viewBox="0 0 12 12" preserveAspectRatio="none"><rect x="0" y="0.500" width="12" height="11" rx="1.200" fill="#1a6fa8"/><path d="M1.500 9.800l2.800-3.600 2.100 2.500 1.500-1.700 2.600 2.800z" fill="#fff"/></svg>
<div class="t" style="left:1015.0px;top:407.0px;font-size:10.6px;line-height:16px;color:#1a6fa8;transform:scaleX(1.040);transform-origin:0 50%;">0000</div>
<div class="t" style="left:1167.0px;top:407.0px;font-size:10.6px;line-height:16px;color:#2e2e2e;transform:scaleX(1.040);transform-origin:0 50%;">5</div>
<div class="t" style="left:1429.0px;top:407.0px;font-size:10.6px;line-height:16px;color:#2e2e2e;transform:scaleX(1.040);transform-origin:0 50%;">0</div>
<div class="t" style="left:1787.0px;top:407.0px;font-size:10.6px;line-height:16px;color:#2b95e2;transform:scaleX(1.074);transform-origin:0 50%;">Ready to Ship</div>
<div class="r" style="left:477px;top:424.71px;width:1427px;height:19.33000000000004px;background:#eaf2f6;"></div>
<div class="r" style="left:483px;top:427.875px;width:18px;height:14px;box-sizing:border-box;border:solid #07619c;border-width:1.6px 2px;border-radius:2.500px;background:#eaf2f6;"></div>
<div class="t" style="left:514.0px;top:426.4px;font-size:10.6px;line-height:16px;color:#2e2e2e;transform:scaleX(1.115);transform-origin:0 50%;">10/26/2021 03:41 PM</div>
<div class="t" style="left:642.0px;top:426.4px;font-size:10.6px;line-height:16px;color:#2e2e2e;transform:scaleX(1.040);transform-origin:0 50%;">0</div>
<div class="t" style="left:742.0px;top:426.4px;font-size:10.6px;line-height:16px;color:#1a6fa8;transform:scaleX(1.031);transform-origin:0 50%;">SO-0048309</div>
<div class="t" style="left:817.0px;top:426.4px;font-size:10.6px;line-height:16px;color:#1a6fa8;transform:scaleX(1.040);transform-origin:0 50%;">SHO-0048309</div>
<svg style="left:998px;top:429.575px" width="12.0" height="9.600000000000001" viewBox="0 0 12 12" preserveAspectRatio="none"><rect x="0" y="0.500" width="12" height="11" rx="1.200" fill="#1a6fa8"/><path d="M1.500 9.800l2.800-3.600 2.100 2.500 1.500-1.700 2.600 2.800z" fill="#fff"/></svg>
<div class="t" style="left:1015.0px;top:426.4px;font-size:10.6px;line-height:16px;color:#1a6fa8;transform:scaleX(1.040);transform-origin:0 50%;">0000</div>
<div class="t" style="left:1167.0px;top:426.4px;font-size:10.6px;line-height:16px;color:#2e2e2e;transform:scaleX(1.040);transform-origin:0 50%;">5</div>
<svg style="left:1253px;top:428.375px" width="12.5" height="12.0" viewBox="0 0 12.500 15" preserveAspectRatio="none"><path d="M2.400 1h5l4.100 4.200v7.400a1.400 1.400 0 0 1-1.400 1.400h-7.700a1.400 1.400 0 0 1-1.400-1.400V2.400A1.400 1.400 0 0 1 2.400 1z" fill="none" stroke="#1a6fa8" stroke-width="1.800"/><path d="M3.600 7.600h5.400M3.600 10.600h5.400" stroke="#1a6fa8" stroke-width="1.500"/></svg>
<div class="t" style="left:1429.0px;top:426.4px;font-size:10.6px;line-height:16px;color:#2e2e2e;transform:scaleX(1.040);transform-origin:0 50%;">0</div>
<div class="t" style="left:1787.0px;top:426.4px;font-size:10.6px;line-height:16px;color:#2b95e2;transform:scaleX(1.074);transform-origin:0 50%;">Ready to Ship</div>
<div class="r" style="left:477px;top:444.04px;width:1427px;height:19.329999999999984px;background:#fff;"></div>
<div class="r" style="left:483px;top:447.20500000000004px;width:18px;height:14px;box-sizing:border-box;border:solid #07619c;border-width:1.6px 2px;border-radius:2.500px;background:#fff;"></div>
<div class="t" style="left:514.0px;top:445.7px;font-size:10.6px;line-height:16px;color:#2e2e2e;transform:scaleX(1.115);transform-origin:0 50%;">08/27/2021 01:58 PM</div>
<div class="t" style="left:642.0px;top:445.7px;font-size:10.6px;line-height:16px;color:#2e2e2e;transform:scaleX(1.040);transform-origin:0 50%;">0</div>
<div class="t" style="left:742.0px;top:445.7px;font-size:10.6px;line-height:16px;color:#1a6fa8;transform:scaleX(1.031);transform-origin:0 50%;">SO-0046654</div>
<div class="t" style="left:817.0px;top:445.7px;font-size:10.6px;line-height:16px;color:#1a6fa8;transform:scaleX(1.040);transform-origin:0 50%;">SHO-0046654</div>
<svg style="left:998px;top:448.90500000000003px" width="12.0" height="9.600000000000001" viewBox="0 0 12 12" preserveAspectRatio="none"><rect x="0" y="0.500" width="12" height="11" rx="1.200" fill="#1a6fa8"/><path d="M1.500 9.800l2.800-3.600 2.100 2.500 1.500-1.700 2.600 2.800z" fill="#fff"/></svg>
<div class="t" style="left:1015.0px;top:445.7px;font-size:10.6px;line-height:16px;color:#1a6fa8;transform:scaleX(1.040);transform-origin:0 50%;">000000</div>
<div class="t" style="left:1167.0px;top:445.7px;font-size:10.6px;line-height:16px;color:#2e2e2e;transform:scaleX(1.040);transform-origin:0 50%;">1</div>
<div class="t" style="left:1429.0px;top:445.7px;font-size:10.6px;line-height:16px;color:#2e2e2e;transform:scaleX(1.040);transform-origin:0 50%;">0</div>
<div class="t" style="left:1787.0px;top:445.7px;font-size:10.6px;line-height:16px;color:#2b95e2;transform:scaleX(1.074);transform-origin:0 50%;">Ready to Ship</div>
<div class="r" style="left:477px;top:463.37px;width:1427px;height:19.329999999999984px;background:#eaf2f6;"></div>
<div class="r" style="left:483px;top:466.53499999999997px;width:18px;height:14px;box-sizing:border-box;border:solid #07619c;border-width:1.6px 2px;border-radius:2.500px;background:#eaf2f6;"></div>
<div class="t" style="left:514.0px;top:465.0px;font-size:10.6px;line-height:16px;color:#2e2e2e;transform:scaleX(1.130);transform-origin:0 50%;">09/01/2021 11:35 AM</div>
<div class="t" style="left:642.0px;top:465.0px;font-size:10.6px;line-height:16px;color:#2e2e2e;transform:scaleX(1.040);transform-origin:0 50%;">0</div>
<div class="t" style="left:742.0px;top:465.0px;font-size:10.6px;line-height:16px;color:#1a6fa8;transform:scaleX(1.031);transform-origin:0 50%;">SO-0046889</div>
<div class="t" style="left:817.0px;top:465.0px;font-size:10.6px;line-height:16px;color:#1a6fa8;transform:scaleX(1.040);transform-origin:0 50%;">SHO-0046889</div>
<svg style="left:998px;top:468.23499999999996px" width="12.0" height="9.600000000000001" viewBox="0 0 12 12" preserveAspectRatio="none"><rect x="0" y="0.500" width="12" height="11" rx="1.200" fill="#1a6fa8"/><path d="M1.500 9.800l2.800-3.600 2.100 2.500 1.500-1.700 2.600 2.800z" fill="#fff"/></svg>
<div class="t" style="left:1015.0px;top:465.0px;font-size:10.6px;line-height:16px;color:#1a6fa8;transform:scaleX(1.040);transform-origin:0 50%;">000000</div>
<div class="t" style="left:1167.0px;top:465.0px;font-size:10.6px;line-height:16px;color:#2e2e2e;transform:scaleX(1.040);transform-origin:0 50%;">5</div>
<svg style="left:1253px;top:467.03499999999997px" width="12.5" height="12.0" viewBox="0 0 12.500 15" preserveAspectRatio="none"><path d="M2.400 1h5l4.100 4.200v7.400a1.400 1.400 0 0 1-1.400 1.400h-7.700a1.400 1.400 0 0 1-1.400-1.400V2.400A1.400 1.400 0 0 1 2.400 1z" fill="none" stroke="#1a6fa8" stroke-width="1.800"/><path d="M3.600 7.600h5.400M3.600 10.600h5.400" stroke="#1a6fa8" stroke-width="1.500"/></svg>
<div class="t" style="left:1429.0px;top:465.0px;font-size:10.6px;line-height:16px;color:#2e2e2e;transform:scaleX(1.040);transform-origin:0 50%;">0</div>
<div class="t" style="left:1787.0px;top:465.0px;font-size:10.6px;line-height:16px;color:#2b95e2;transform:scaleX(1.074);transform-origin:0 50%;">Ready to Ship</div>
<div class="r" style="left:477px;top:482.7px;width:1427px;height:19.329999999999984px;background:#fff;"></div>
<div class="r" style="left:483px;top:485.865px;width:18px;height:14px;box-sizing:border-box;border:solid #07619c;border-width:1.6px 2px;border-radius:2.500px;background:#fff;"></div>
<div class="t" style="left:514.0px;top:484.4px;font-size:10.6px;line-height:16px;color:#2e2e2e;transform:scaleX(1.130);transform-origin:0 50%;">09/03/2021 11:22 AM</div>
<div class="t" style="left:642.0px;top:484.4px;font-size:10.6px;line-height:16px;color:#2e2e2e;transform:scaleX(1.040);transform-origin:0 50%;">0</div>
<div class="t" style="left:742.0px;top:484.4px;font-size:10.6px;line-height:16px;color:#1a6fa8;transform:scaleX(1.031);transform-origin:0 50%;">SO-0047065</div>
<div class="t" style="left:817.0px;top:484.4px;font-size:10.6px;line-height:16px;color:#1a6fa8;transform:scaleX(1.040);transform-origin:0 50%;">SHO-0047065</div>
<svg style="left:998px;top:487.565px" width="12.0" height="9.600000000000001" viewBox="0 0 12 12" preserveAspectRatio="none"><rect x="0" y="0.500" width="12" height="11" rx="1.200" fill="#1a6fa8"/><path d="M1.500 9.800l2.800-3.600 2.100 2.500 1.500-1.700 2.600 2.800z" fill="#fff"/></svg>
<div class="t" style="left:1015.0px;top:484.4px;font-size:10.6px;line-height:16px;color:#1a6fa8;transform:scaleX(1.040);transform-origin:0 50%;">000000</div>
<div class="t" style="left:1167.0px;top:484.4px;font-size:10.6px;line-height:16px;color:#2e2e2e;transform:scaleX(1.040);transform-origin:0 50%;">2</div>
<div class="t" style="left:1429.0px;top:484.4px;font-size:10.6px;line-height:16px;color:#2e2e2e;transform:scaleX(1.040);transform-origin:0 50%;">0</div>
<div class="t" style="left:1787.0px;top:484.4px;font-size:10.6px;line-height:16px;color:#2b95e2;transform:scaleX(1.074);transform-origin:0 50%;">Ready to Ship</div>
<div class="r" style="left:477px;top:502.03px;width:1427px;height:19.33000000000004px;background:#eaf2f6;"></div>
<div class="r" style="left:483px;top:505.19499999999994px;width:18px;height:14px;box-sizing:border-box;border:solid #07619c;border-width:1.6px 2px;border-radius:2.500px;background:#eaf2f6;"></div>
<div class="t" style="left:514.0px;top:503.7px;font-size:10.6px;line-height:16px;color:#2e2e2e;transform:scaleX(1.115);transform-origin:0 50%;">09/07/2021 02:02 PM</div>
<div class="t" style="left:642.0px;top:503.7px;font-size:10.6px;line-height:16px;color:#2e2e2e;transform:scaleX(1.040);transform-origin:0 50%;">739 Park Ave</div>
<div class="t" style="left:742.0px;top:503.7px;font-size:10.6px;line-height:16px;color:#1a6fa8;transform:scaleX(1.031);transform-origin:0 50%;">SO-0047152</div>
<div class="t" style="left:817.0px;top:503.7px;font-size:10.6px;line-height:16px;color:#1a6fa8;transform:scaleX(1.040);transform-origin:0 50%;">SHO-0047152</div>
<svg style="left:998px;top:506.895px" width="12.0" height="9.600000000000001" viewBox="0 0 12 12" preserveAspectRatio="none"><rect x="0" y="0.500" width="12" height="11" rx="1.200" fill="#1a6fa8"/><path d="M1.500 9.800l2.800-3.600 2.100 2.500 1.500-1.700 2.600 2.800z" fill="#fff"/></svg>
<div class="t" style="left:1015.0px;top:503.7px;font-size:10.6px;line-height:16px;color:#1a6fa8;transform:scaleX(1.040);transform-origin:0 50%;">000000</div>
<div class="t" style="left:1167.0px;top:503.7px;font-size:10.6px;line-height:16px;color:#2e2e2e;transform:scaleX(1.040);transform-origin:0 50%;">1</div>
<div class="t" style="left:1429.0px;top:503.7px;font-size:10.6px;line-height:16px;color:#2e2e2e;transform:scaleX(1.040);transform-origin:0 50%;">0</div>
<div class="t" style="left:1787.0px;top:503.7px;font-size:10.6px;line-height:16px;color:#2b95e2;transform:scaleX(1.074);transform-origin:0 50%;">Ready to Ship</div>
<div class="r" style="left:477px;top:521.36px;width:1427px;height:19.33000000000004px;background:#fff;"></div>
<div class="r" style="left:483px;top:524.5250000000001px;width:18px;height:14px;box-sizing:border-box;border:solid #07619c;border-width:1.6px 2px;border-radius:2.500px;background:#fff;"></div>
<div class="t" style="left:514.0px;top:523.0px;font-size:10.6px;line-height:16px;color:#2e2e2e;transform:scaleX(1.115);transform-origin:0 50%;">07/02/2021 06:03 PM</div>
<div class="t" style="left:642.0px;top:523.0px;font-size:10.6px;line-height:16px;color:#2e2e2e;transform:scaleX(1.040);transform-origin:0 50%;">New Customer</div>
<div class="t" style="left:742.0px;top:523.0px;font-size:10.6px;line-height:16px;color:#1a6fa8;transform:scaleX(1.031);transform-origin:0 50%;">SO-0045280</div>
<div class="t" style="left:817.0px;top:523.0px;font-size:10.6px;line-height:16px;color:#1a6fa8;transform:scaleX(1.040);transform-origin:0 50%;">SHO-0045280</div>
<svg style="left:998px;top:526.2250000000001px" width="12.0" height="9.600000000000001" viewBox="0 0 12 12" preserveAspectRatio="none"><rect x="0" y="0.500" width="12" height="11" rx="1.200" fill="#1a6fa8"/><path d="M1.500 9.800l2.800-3.600 2.100 2.500 1.500-1.700 2.600 2.800z" fill="#fff"/></svg>
<div class="t" style="left:1015.0px;top:523.0px;font-size:10.6px;line-height:16px;color:#1a6fa8;transform:scaleX(1.040);transform-origin:0 50%;">0001</div>
<div class="t" style="left:1067.0px;top:523.0px;font-size:10.6px;line-height:16px;color:#2e2e2e;transform:scaleX(1.040);transform-origin:0 50%;">asds</div>
<div class="t" style="left:1167.0px;top:523.0px;font-size:10.6px;line-height:16px;color:#2e2e2e;transform:scaleX(1.040);transform-origin:0 50%;">5</div>
<div class="t" style="left:1357.0px;top:523.0px;font-size:10.6px;line-height:16px;color:#23386b;transform:scaleX(1.040);transform-origin:0 50%;">USPS</div>
<div class="t" style="left:1429.0px;top:523.0px;font-size:10.6px;line-height:16px;color:#2e2e2e;transform:scaleX(1.040);transform-origin:0 50%;">10</div>
<div class="t" style="left:1497.0px;top:523.0px;font-size:10.6px;line-height:16px;color:#2e2e2e;transform:scaleX(1.040);transform-origin:0 50%;">1 box</div>
<div class="t" style="left:1787.0px;top:523.0px;font-size:10.6px;line-height:16px;color:#2b95e2;transform:scaleX(1.074);transform-origin:0 50%;">Ready to Ship</div>
<div class="r" style="left:477px;top:540.69px;width:1427px;height:19.329999999999927px;background:#eaf2f6;"></div>
<div class="r" style="left:483px;top:543.855px;width:18px;height:14px;box-sizing:border-box;border:solid #07619c;border-width:1.6px 2px;border-radius:2.500px;background:#eaf2f6;"></div>
<div class="t" style="left:514.0px;top:542.4px;font-size:10.6px;line-height:16px;color:#2e2e2e;transform:scaleX(1.115);transform-origin:0 50%;">07/02/2021 06:22 PM</div>
<div class="t" style="left:642.0px;top:542.4px;font-size:10.6px;line-height:16px;color:#2e2e2e;transform:scaleX(1.040);transform-origin:0 50%;">New Customer</div>
<div class="t" style="left:742.0px;top:542.4px;font-size:10.6px;line-height:16px;color:#1a6fa8;transform:scaleX(1.031);transform-origin:0 50%;">SO-0045284</div>
<div class="t" style="left:817.0px;top:542.4px;font-size:10.6px;line-height:16px;color:#1a6fa8;transform:scaleX(1.040);transform-origin:0 50%;">SHO-0045284</div>
<svg style="left:998px;top:545.5550000000001px" width="12.0" height="9.600000000000001" viewBox="0 0 12 12" preserveAspectRatio="none"><rect x="0" y="0.500" width="12" height="11" rx="1.200" fill="#1a6fa8"/><path d="M1.500 9.800l2.800-3.600 2.100 2.500 1.500-1.700 2.600 2.800z" fill="#fff"/></svg>
<div class="t" style="left:1015.0px;top:542.4px;font-size:10.6px;line-height:16px;color:#1a6fa8;transform:scaleX(1.040);transform-origin:0 50%;">0001</div>
<div class="t" style="left:1067.0px;top:542.4px;font-size:10.6px;line-height:16px;color:#2e2e2e;transform:scaleX(1.040);transform-origin:0 50%;">asds</div>
<div class="t" style="left:1167.0px;top:542.4px;font-size:10.6px;line-height:16px;color:#2e2e2e;transform:scaleX(1.040);transform-origin:0 50%;">6</div>
<div class="t" style="left:1429.0px;top:542.4px;font-size:10.6px;line-height:16px;color:#2e2e2e;transform:scaleX(1.040);transform-origin:0 50%;">12.75</div>
<div class="t" style="left:1787.0px;top:542.4px;font-size:10.6px;line-height:16px;color:#2b95e2;transform:scaleX(1.074);transform-origin:0 50%;">Ready to Ship</div>
<div class="r" style="left:477px;top:560.02px;width:1427px;height:19.33000000000004px;background:#fff;"></div>
<div class="r" style="left:483px;top:563.185px;width:18px;height:14px;box-sizing:border-box;border:solid #07619c;border-width:1.6px 2px;border-radius:2.500px;background:#fff;"></div>
<div class="t" style="left:514.0px;top:561.7px;font-size:10.6px;line-height:16px;color:#2e2e2e;transform:scaleX(1.115);transform-origin:0 50%;">07/13/2021 04:31 PM</div>
<div class="t" style="left:642.0px;top:561.7px;font-size:10.6px;line-height:16px;color:#2e2e2e;transform:scaleX(1.040);transform-origin:0 50%;">01qwerty</div>
<div class="t" style="left:742.0px;top:561.7px;font-size:10.6px;line-height:16px;color:#1a6fa8;transform:scaleX(1.031);transform-origin:0 50%;">SO-0045497</div>
<div class="t" style="left:817.0px;top:561.7px;font-size:10.6px;line-height:16px;color:#1a6fa8;transform:scaleX(1.040);transform-origin:0 50%;">SHO-0045497</div>
<svg style="left:998px;top:564.885px" width="12.0" height="9.600000000000001" viewBox="0 0 12 12" preserveAspectRatio="none"><rect x="0" y="0.500" width="12" height="11" rx="1.200" fill="#1a6fa8"/><path d="M1.500 9.800l2.800-3.600 2.100 2.500 1.500-1.700 2.600 2.800z" fill="#fff"/></svg>
<div class="t" style="left:1015.0px;top:561.7px;font-size:10.6px;line-height:16px;color:#1a6fa8;transform:scaleX(1.040);transform-origin:0 50%;">0001</div>
<div class="t" style="left:1067.0px;top:561.7px;font-size:10.6px;line-height:16px;color:#2e2e2e;transform:scaleX(1.040);transform-origin:0 50%;">asds</div>
<div class="t" style="left:1167.0px;top:561.7px;font-size:10.6px;line-height:16px;color:#2e2e2e;transform:scaleX(1.040);transform-origin:0 50%;">2</div>
<div class="t" style="left:1357.0px;top:561.7px;font-size:10.6px;line-height:16px;color:#23386b;transform:scaleX(1.040);transform-origin:0 50%;">UPS</div>
<div class="t" style="left:1429.0px;top:561.7px;font-size:10.6px;line-height:16px;color:#2e2e2e;transform:scaleX(1.040);transform-origin:0 50%;">10.125</div>
<div class="t" style="left:1497.0px;top:561.7px;font-size:10.6px;line-height:16px;color:#2e2e2e;transform:scaleX(1.040);transform-origin:0 50%;">1 box</div>
<div class="t" style="left:1787.0px;top:561.7px;font-size:10.6px;line-height:16px;color:#2b95e2;transform:scaleX(1.074);transform-origin:0 50%;">Ready to Ship</div>
<div class="r" style="left:477px;top:579.35px;width:1427px;height:19.329999999999927px;background:#eaf2f6;"></div>
<div class="r" style="left:483px;top:582.515px;width:18px;height:14px;box-sizing:border-box;border:solid #07619c;border-width:1.6px 2px;border-radius:2.500px;background:#eaf2f6;"></div>
<div class="t" style="left:514.0px;top:581.0px;font-size:10.6px;line-height:16px;color:#2e2e2e;transform:scaleX(1.115);transform-origin:0 50%;">07/13/2021 04:56 PM</div>
<div class="t" style="left:642.0px;top:581.0px;font-size:10.6px;line-height:16px;color:#2e2e2e;transform:scaleX(1.040);transform-origin:0 50%;">739 Park Ave</div>
<div class="t" style="left:742.0px;top:581.0px;font-size:10.6px;line-height:16px;color:#1a6fa8;transform:scaleX(1.031);transform-origin:0 50%;">SO-0045510</div>
<div class="t" style="left:817.0px;top:581.0px;font-size:10.6px;line-height:16px;color:#1a6fa8;transform:scaleX(1.040);transform-origin:0 50%;">SHO-0045510</div>
<svg style="left:998px;top:584.215px" width="12.0" height="9.600000000000001" viewBox="0 0 12 12" preserveAspectRatio="none"><rect x="0" y="0.500" width="12" height="11" rx="1.200" fill="#1a6fa8"/><path d="M1.500 9.800l2.800-3.600 2.100 2.500 1.500-1.700 2.600 2.800z" fill="#fff"/></svg>
<div class="t" style="left:1015.0px;top:581.0px;font-size:10.6px;line-height:16px;color:#1a6fa8;transform:scaleX(1.040);transform-origin:0 50%;">0001</div>
<div class="t" style="left:1067.0px;top:581.0px;font-size:10.6px;line-height:16px;color:#2e2e2e;transform:scaleX(1.040);transform-origin:0 50%;">12345</div>
<div class="t" style="left:1167.0px;top:581.0px;font-size:10.6px;line-height:16px;color:#2e2e2e;transform:scaleX(1.040);transform-origin:0 50%;">5</div>
<div class="t" style="left:1357.0px;top:581.0px;font-size:10.6px;line-height:16px;color:#23386b;transform:scaleX(1.040);transform-origin:0 50%;">LTL</div>
<div class="t" style="left:1429.0px;top:581.0px;font-size:10.6px;line-height:16px;color:#2e2e2e;transform:scaleX(1.040);transform-origin:0 50%;">14.625</div>
<div class="t" style="left:1497.0px;top:581.0px;font-size:10.6px;line-height:16px;color:#2e2e2e;transform:scaleX(1.040);transform-origin:0 50%;">2 box</div>
<div class="t" style="left:1787.0px;top:581.0px;font-size:10.6px;line-height:16px;color:#2b95e2;transform:scaleX(1.074);transform-origin:0 50%;">Ready to Ship</div>
<div class="r" style="left:477px;top:598.68px;width:1427px;height:19.33000000000004px;background:#fff;"></div>
<div class="r" style="left:483px;top:601.845px;width:18px;height:14px;box-sizing:border-box;border:solid #07619c;border-width:1.6px 2px;border-radius:2.500px;background:#fff;"></div>
<div class="t" style="left:514.0px;top:600.3px;font-size:10.6px;line-height:16px;color:#2e2e2e;transform:scaleX(1.115);transform-origin:0 50%;">07/13/2021 05:30 PM</div>
<div class="t" style="left:642.0px;top:600.3px;font-size:10.6px;line-height:16px;color:#2e2e2e;transform:scaleX(1.040);transform-origin:0 50%;">739 Park Ave</div>
<div class="t" style="left:742.0px;top:600.3px;font-size:10.6px;line-height:16px;color:#1a6fa8;transform:scaleX(1.031);transform-origin:0 50%;">SO-0045519</div>
<div class="t" style="left:817.0px;top:600.3px;font-size:10.6px;line-height:16px;color:#1a6fa8;transform:scaleX(1.040);transform-origin:0 50%;">SHO-0045519</div>
<svg style="left:998px;top:603.5450000000001px" width="12.0" height="9.600000000000001" viewBox="0 0 12 12" preserveAspectRatio="none"><rect x="0" y="0.500" width="12" height="11" rx="1.200" fill="#1a6fa8"/><path d="M1.500 9.800l2.800-3.600 2.100 2.500 1.500-1.700 2.600 2.800z" fill="#fff"/></svg>
<div class="t" style="left:1015.0px;top:600.3px;font-size:10.6px;line-height:16px;color:#1a6fa8;transform:scaleX(1.040);transform-origin:0 50%;">0001</div>
<div class="t" style="left:1067.0px;top:600.3px;font-size:10.6px;line-height:16px;color:#2e2e2e;transform:scaleX(1.040);transform-origin:0 50%;">12345</div>
<div class="t" style="left:1167.0px;top:600.3px;font-size:10.6px;line-height:16px;color:#2e2e2e;transform:scaleX(1.040);transform-origin:0 50%;">5</div>
<div class="t" style="left:1357.0px;top:600.3px;font-size:10.6px;line-height:16px;color:#23386b;transform:scaleX(1.040);transform-origin:0 50%;">LTL</div>
<div class="t" style="left:1429.0px;top:600.3px;font-size:10.6px;line-height:16px;color:#2e2e2e;transform:scaleX(1.040);transform-origin:0 50%;">14.625</div>
<div class="t" style="left:1497.0px;top:600.3px;font-size:10.6px;line-height:16px;color:#2e2e2e;transform:scaleX(1.040);transform-origin:0 50%;">2 box</div>
<div class="t" style="left:1787.0px;top:600.3px;font-size:10.6px;line-height:16px;color:#2b95e2;transform:scaleX(1.074);transform-origin:0 50%;">Ready to Ship</div>
<div class="r" style="left:477px;top:618.01px;width:1427px;height:19.33000000000004px;background:#eaf2f6;"></div>
<div class="r" style="left:483px;top:621.175px;width:18px;height:14px;box-sizing:border-box;border:solid #07619c;border-width:1.6px 2px;border-radius:2.500px;background:#eaf2f6;"></div>
<div class="t" style="left:514.0px;top:619.7px;font-size:10.6px;line-height:16px;color:#2e2e2e;transform:scaleX(1.115);transform-origin:0 50%;">07/13/2021 06:02 PM</div>
<div class="t" style="left:642.0px;top:619.7px;font-size:10.6px;line-height:16px;color:#2e2e2e;transform:scaleX(1.040);transform-origin:0 50%;">739 Park Ave</div>
<div class="t" style="left:742.0px;top:619.7px;font-size:10.6px;line-height:16px;color:#1a6fa8;transform:scaleX(1.031);transform-origin:0 50%;">SO-0045524</div>
<div class="t" style="left:817.0px;top:619.7px;font-size:10.6px;line-height:16px;color:#1a6fa8;transform:scaleX(1.040);transform-origin:0 50%;">SHO-0045524</div>
<svg style="left:998px;top:622.875px" width="12.0" height="9.600000000000001" viewBox="0 0 12 12" preserveAspectRatio="none"><rect x="0" y="0.500" width="12" height="11" rx="1.200" fill="#1a6fa8"/><path d="M1.500 9.800l2.800-3.600 2.100 2.500 1.500-1.700 2.600 2.800z" fill="#fff"/></svg>
<div class="t" style="left:1015.0px;top:619.7px;font-size:10.6px;line-height:16px;color:#1a6fa8;transform:scaleX(1.040);transform-origin:0 50%;">0001</div>
<div class="t" style="left:1067.0px;top:619.7px;font-size:10.6px;line-height:16px;color:#2e2e2e;transform:scaleX(1.040);transform-origin:0 50%;">12345</div>
<div class="t" style="left:1167.0px;top:619.7px;font-size:10.6px;line-height:16px;color:#2e2e2e;transform:scaleX(1.040);transform-origin:0 50%;">5</div>
<div class="t" style="left:1357.0px;top:619.7px;font-size:10.6px;line-height:16px;color:#23386b;transform:scaleX(1.040);transform-origin:0 50%;">LTL</div>
<div class="t" style="left:1429.0px;top:619.7px;font-size:10.6px;line-height:16px;color:#2e2e2e;transform:scaleX(1.040);transform-origin:0 50%;">14.625</div>
<div class="t" style="left:1497.0px;top:619.7px;font-size:10.6px;line-height:16px;color:#2e2e2e;transform:scaleX(1.040);transform-origin:0 50%;">2 box</div>
<div class="t" style="left:1787.0px;top:619.7px;font-size:10.6px;line-height:16px;color:#2b95e2;transform:scaleX(1.074);transform-origin:0 50%;">Ready to Ship</div>
<div class="r" style="left:477px;top:637.34px;width:1427px;height:19.329999999999927px;background:#fff;"></div>
<div class="r" style="left:483px;top:640.505px;width:18px;height:14px;box-sizing:border-box;border:solid #07619c;border-width:1.6px 2px;border-radius:2.500px;background:#fff;"></div>
<div class="t" style="left:514.0px;top:639.0px;font-size:10.6px;line-height:16px;color:#2e2e2e;transform:scaleX(1.115);transform-origin:0 50%;">07/13/2021 03:27 PM</div>
<div class="t" style="left:642.0px;top:639.0px;font-size:10.6px;line-height:16px;color:#2e2e2e;transform:scaleX(1.040);transform-origin:0 50%;">739 Park Ave</div>
<div class="t" style="left:742.0px;top:639.0px;font-size:10.6px;line-height:16px;color:#1a6fa8;transform:scaleX(1.031);transform-origin:0 50%;">SO-0045528</div>
<div class="t" style="left:817.0px;top:639.0px;font-size:10.6px;line-height:16px;color:#1a6fa8;transform:scaleX(1.040);transform-origin:0 50%;">SHO-0045528</div>
<svg style="left:998px;top:642.205px" width="12.0" height="9.600000000000001" viewBox="0 0 12 12" preserveAspectRatio="none"><rect x="0" y="0.500" width="12" height="11" rx="1.200" fill="#1a6fa8"/><path d="M1.500 9.800l2.800-3.600 2.100 2.500 1.500-1.700 2.600 2.800z" fill="#fff"/></svg>
<div class="t" style="left:1015.0px;top:639.0px;font-size:10.6px;line-height:16px;color:#1a6fa8;transform:scaleX(1.040);transform-origin:0 50%;">0001</div>
<div class="t" style="left:1067.0px;top:639.0px;font-size:10.6px;line-height:16px;color:#2e2e2e;transform:scaleX(1.040);transform-origin:0 50%;">12345</div>
<div class="t" style="left:1167.0px;top:639.0px;font-size:10.6px;line-height:16px;color:#2e2e2e;transform:scaleX(1.040);transform-origin:0 50%;">5</div>
<div class="t" style="left:1357.0px;top:639.0px;font-size:10.6px;line-height:16px;color:#23386b;transform:scaleX(1.040);transform-origin:0 50%;">LTL</div>
<div class="t" style="left:1429.0px;top:639.0px;font-size:10.6px;line-height:16px;color:#2e2e2e;transform:scaleX(1.040);transform-origin:0 50%;">14.625</div>
<div class="t" style="left:1497.0px;top:639.0px;font-size:10.6px;line-height:16px;color:#2e2e2e;transform:scaleX(1.040);transform-origin:0 50%;">2 box</div>
<div class="t" style="left:1787.0px;top:639.0px;font-size:10.6px;line-height:16px;color:#2b95e2;transform:scaleX(1.074);transform-origin:0 50%;">Ready to Ship</div>
<div class="r" style="left:477px;top:656.67px;width:1427px;height:19.33000000000004px;background:#eaf2f6;"></div>
<div class="r" style="left:483px;top:659.835px;width:18px;height:14px;box-sizing:border-box;border:solid #07619c;border-width:1.6px 2px;border-radius:2.500px;background:#eaf2f6;"></div>
<div class="t" style="left:514.0px;top:658.3px;font-size:10.6px;line-height:16px;color:#2e2e2e;transform:scaleX(1.115);transform-origin:0 50%;">07/13/2021 03:27 PM</div>
<div class="t" style="left:642.0px;top:658.3px;font-size:10.6px;line-height:16px;color:#2e2e2e;transform:scaleX(1.040);transform-origin:0 50%;">739 Park Ave</div>
<div class="t" style="left:742.0px;top:658.3px;font-size:10.6px;line-height:16px;color:#1a6fa8;transform:scaleX(1.031);transform-origin:0 50%;">SO-0045529</div>
<div class="t" style="left:817.0px;top:658.3px;font-size:10.6px;line-height:16px;color:#1a6fa8;transform:scaleX(1.040);transform-origin:0 50%;">SHO-0045529</div>
<svg style="left:998px;top:661.5350000000001px" width="12.0" height="9.600000000000001" viewBox="0 0 12 12" preserveAspectRatio="none"><rect x="0" y="0.500" width="12" height="11" rx="1.200" fill="#1a6fa8"/><path d="M1.500 9.800l2.800-3.600 2.100 2.500 1.500-1.700 2.600 2.800z" fill="#fff"/></svg>
<div class="t" style="left:1015.0px;top:658.3px;font-size:10.6px;line-height:16px;color:#1a6fa8;transform:scaleX(1.040);transform-origin:0 50%;">0001</div>
<div class="t" style="left:1067.0px;top:658.3px;font-size:10.6px;line-height:16px;color:#2e2e2e;transform:scaleX(1.040);transform-origin:0 50%;">12345</div>
<div class="t" style="left:1167.0px;top:658.3px;font-size:10.6px;line-height:16px;color:#2e2e2e;transform:scaleX(1.040);transform-origin:0 50%;">5</div>
<div class="t" style="left:1357.0px;top:658.3px;font-size:10.6px;line-height:16px;color:#23386b;transform:scaleX(1.040);transform-origin:0 50%;">FedEx</div>
<div class="t" style="left:1429.0px;top:658.3px;font-size:10.6px;line-height:16px;color:#2e2e2e;transform:scaleX(1.040);transform-origin:0 50%;">8.375</div>
<div class="t" style="left:1497.0px;top:658.3px;font-size:10.6px;line-height:16px;color:#2e2e2e;transform:scaleX(1.040);transform-origin:0 50%;">1 box</div>
<div class="t" style="left:1647.0px;top:658.3px;font-size:10.6px;line-height:16px;color:#2e2e2e;transform:scaleX(1.040);transform-origin:0 50%;">FedEx 2...</div>
<div class="t" style="left:1787.0px;top:658.3px;font-size:10.6px;line-height:16px;color:#2b95e2;transform:scaleX(1.074);transform-origin:0 50%;">Ready to Ship</div>
<div class="r" style="left:477px;top:676.0px;width:1427px;height:19.33000000000004px;background:#fff;"></div>
<div class="r" style="left:483px;top:679.165px;width:18px;height:14px;box-sizing:border-box;border:solid #07619c;border-width:1.6px 2px;border-radius:2.500px;background:#fff;"></div>
<div class="t" style="left:514.0px;top:677.7px;font-size:10.6px;line-height:16px;color:#2e2e2e;transform:scaleX(1.115);transform-origin:0 50%;">07/15/2021 02:21 PM</div>
<div class="t" style="left:642.0px;top:677.7px;font-size:10.6px;line-height:16px;color:#2e2e2e;transform:scaleX(1.040);transform-origin:0 50%;">Karinatest</div>
<div class="t" style="left:742.0px;top:677.7px;font-size:10.6px;line-height:16px;color:#1a6fa8;transform:scaleX(1.031);transform-origin:0 50%;">SO-0045605</div>
<div class="t" style="left:817.0px;top:677.7px;font-size:10.6px;line-height:16px;color:#1a6fa8;transform:scaleX(1.040);transform-origin:0 50%;">SHO-0045605</div>
<svg style="left:998px;top:680.865px" width="12.0" height="9.600000000000001" viewBox="0 0 12 12" preserveAspectRatio="none"><rect x="0" y="0.500" width="12" height="11" rx="1.200" fill="#1a6fa8"/><path d="M1.500 9.800l2.800-3.600 2.100 2.500 1.500-1.700 2.600 2.800z" fill="#fff"/></svg>
<div class="t" style="left:1015.0px;top:677.7px;font-size:10.6px;line-height:16px;color:#1a6fa8;transform:scaleX(1.040);transform-origin:0 50%;">0001</div>
<div class="t" style="left:1067.0px;top:677.7px;font-size:10.6px;line-height:16px;color:#2e2e2e;transform:scaleX(1.040);transform-origin:0 50%;">asds</div>
<div class="t" style="left:1167.0px;top:677.7px;font-size:10.6px;line-height:16px;color:#2e2e2e;transform:scaleX(1.040);transform-origin:0 50%;">1</div>
<div class="t" style="left:1429.0px;top:677.7px;font-size:10.6px;line-height:16px;color:#2e2e2e;transform:scaleX(1.040);transform-origin:0 50%;">4.125</div>
<div class="t" style="left:1497.0px;top:677.7px;font-size:10.6px;line-height:16px;color:#2e2e2e;transform:scaleX(1.040);transform-origin:0 50%;">1 box</div>
<div class="t" style="left:1787.0px;top:677.7px;font-size:10.6px;line-height:16px;color:#2b95e2;transform:scaleX(1.074);transform-origin:0 50%;">Ready to Ship</div>
<div class="r" style="left:477px;top:695.33px;width:1427px;height:19.329999999999927px;background:#eaf2f6;"></div>
<div class="r" style="left:483px;top:698.495px;width:18px;height:14px;box-sizing:border-box;border:solid #07619c;border-width:1.6px 2px;border-radius:2.500px;background:#eaf2f6;"></div>
<div class="t" style="left:514.0px;top:697.0px;font-size:10.6px;line-height:16px;color:#2e2e2e;transform:scaleX(1.121);transform-origin:0 50%;">07/27/2021 08:59 AM</div>
<div class="t" style="left:642.0px;top:697.0px;font-size:10.6px;line-height:16px;color:#2e2e2e;transform:scaleX(1.040);transform-origin:0 50%;">0021test, Ares</div>
<div class="t" style="left:742.0px;top:697.0px;font-size:10.6px;line-height:16px;color:#1a6fa8;transform:scaleX(1.031);transform-origin:0 50%;">SO-0045974</div>
<div class="t" style="left:817.0px;top:697.0px;font-size:10.6px;line-height:16px;color:#1a6fa8;transform:scaleX(1.053);transform-origin:0 50%;">SHO-0045974-1</div>
<svg style="left:998px;top:700.195px" width="12.0" height="9.600000000000001" viewBox="0 0 12 12" preserveAspectRatio="none"><rect x="0" y="0.500" width="12" height="11" rx="1.200" fill="#1a6fa8"/><path d="M1.500 9.800l2.800-3.600 2.100 2.500 1.500-1.700 2.600 2.800z" fill="#fff"/></svg>
<div class="t" style="left:1015.0px;top:697.0px;font-size:10.6px;line-height:16px;color:#1a6fa8;transform:scaleX(1.040);transform-origin:0 50%;">0001</div>
<div class="t" style="left:1067.0px;top:697.0px;font-size:10.6px;line-height:16px;color:#2e2e2e;transform:scaleX(1.040);transform-origin:0 50%;">asds</div>
<div class="t" style="left:1167.0px;top:697.0px;font-size:10.6px;line-height:16px;color:#2e2e2e;transform:scaleX(1.040);transform-origin:0 50%;">1</div>
<div class="t" style="left:1429.0px;top:697.0px;font-size:10.6px;line-height:16px;color:#2e2e2e;transform:scaleX(1.040);transform-origin:0 50%;">4.125</div>
<div class="t" style="left:1497.0px;top:697.0px;font-size:10.6px;line-height:16px;color:#2e2e2e;transform:scaleX(1.040);transform-origin:0 50%;">1 box</div>
<div class="t" style="left:1719.0px;top:697.0px;font-size:10.6px;line-height:16px;color:#2e2e2e;transform:scaleX(1.040);transform-origin:0 50%;">Ukraine</div>
<div class="t" style="left:1787.0px;top:697.0px;font-size:10.6px;line-height:16px;color:#2b95e2;transform:scaleX(1.074);transform-origin:0 50%;">Ready to Ship</div>
<div class="r" style="left:477px;top:714.66px;width:1427px;height:19.33000000000004px;background:#fff;"></div>
<div class="r" style="left:483px;top:717.825px;width:18px;height:14px;box-sizing:border-box;border:solid #07619c;border-width:1.6px 2px;border-radius:2.500px;background:#fff;"></div>
<div class="t" style="left:514.0px;top:716.3px;font-size:10.6px;line-height:16px;color:#2e2e2e;transform:scaleX(1.115);transform-origin:0 50%;">10/12/2021 03:22 PM</div>
<div class="t" style="left:642.0px;top:716.3px;font-size:10.6px;line-height:16px;color:#2e2e2e;transform:scaleX(1.040);transform-origin:0 50%;">00</div>
<div class="t" style="left:742.0px;top:716.3px;font-size:10.6px;line-height:16px;color:#1a6fa8;transform:scaleX(1.031);transform-origin:0 50%;">SO-0048050</div>
<div class="t" style="left:817.0px;top:716.3px;font-size:10.6px;line-height:16px;color:#1a6fa8;transform:scaleX(1.040);transform-origin:0 50%;">SHO-0048050</div>
<svg style="left:998px;top:719.5250000000001px" width="12.0" height="9.600000000000001" viewBox="0 0 12 12" preserveAspectRatio="none"><rect x="0" y="0.500" width="12" height="11" rx="1.200" fill="#1a6fa8"/><path d="M1.500 9.800l2.800-3.600 2.100 2.500 1.500-1.700 2.600 2.800z" fill="#fff"/></svg>
<div class="t" style="left:1015.0px;top:716.3px;font-size:10.6px;line-height:16px;color:#1a6fa8;transform:scaleX(1.040);transform-origin:0 50%;">0001</div>
<div class="t" style="left:1067.0px;top:716.3px;font-size:10.6px;line-height:16px;color:#2e2e2e;transform:scaleX(1.040);transform-origin:0 50%;">asds</div>
<div class="t" style="left:1167.0px;top:716.3px;font-size:10.6px;line-height:16px;color:#2e2e2e;transform:scaleX(1.040);transform-origin:0 50%;">2</div>
<div class="t" style="left:1429.0px;top:716.3px;font-size:10.6px;line-height:16px;color:#2e2e2e;transform:scaleX(1.040);transform-origin:0 50%;">4.125</div>
<div class="t" style="left:1497.0px;top:716.3px;font-size:10.6px;line-height:16px;color:#2e2e2e;transform:scaleX(1.040);transform-origin:0 50%;">1 box</div>
<div class="t" style="left:1787.0px;top:716.3px;font-size:10.6px;line-height:16px;color:#2b95e2;transform:scaleX(1.074);transform-origin:0 50%;">Ready to Ship</div>
<div class="clip" style="left:0;top:733.99px;width:1920px;height:52.00999999999999px">
<div class="r" style="left:477px;top:0px;width:1427px;height:60px;background:#eaf2f6;"></div>
<div class="r" style="left:483px;top:45.809999999999945px;width:18px;height:14px;box-sizing:border-box;border:solid #07619c;border-width:1.6px 2px;border-radius:2.500px;background:#eaf2f6;"></div>
<div class="t" style="left:514.5px;top:43.6px;font-size:10.6px;line-height:16px;color:#222;transform:scaleX(1.115);transform-origin:0 50%;">07/21/2021 04:16 PM</div>
<div class="t" style="left:642.0px;top:43.6px;font-size:10.6px;line-height:16px;color:#222;transform:scaleX(1.040);transform-origin:0 50%;">111111</div>
<div class="t" style="left:742.0px;top:43.6px;font-size:10.6px;line-height:16px;color:#1a6fa8;transform:scaleX(1.031);transform-origin:0 50%;">SO-0045787</div>
<div class="t" style="left:817.0px;top:43.6px;font-size:10.6px;line-height:16px;color:#1a6fa8;transform:scaleX(1.040);transform-origin:0 50%;">SHO-0045787</div>
<div class="t" style="left:1167.0px;top:43.6px;font-size:10.6px;line-height:16px;color:#222;transform:scaleX(1.040);transform-origin:0 50%;">1</div>
<div class="t" style="left:1429.0px;top:43.6px;font-size:10.6px;line-height:16px;color:#222;transform:scaleX(1.040);transform-origin:0 50%;">0</div>
<div class="t" style="left:1787.0px;top:43.6px;font-size:10.6px;line-height:16px;color:#2b95e2;transform:scaleX(1.074);transform-origin:0 50%;">Ready to Ship</div>
<svg style="left:998px;top:47.709999999999994px" width="12.0" height="9.600000000000001" viewBox="0 0 12 12" preserveAspectRatio="none"><rect x="0" y="0.500" width="12" height="11" rx="1.200" fill="#1a6fa8"/><path d="M1.500 9.800l2.800-3.600 2.100 2.500 1.500-1.700 2.600 2.800z" fill="#fff"/></svg>
<div class="t" style="left:1014.0px;top:39.0px;font-size:10.6px;line-height:16px;color:#1a6fa8;transform:scaleX(1.040);transform-origin:0 50%;">0051907</div>
<div class="t" style="left:1067.0px;top:-2.0px;font-size:10.6px;line-height:16px;color:#222;transform:scaleX(1.040);transform-origin:0 50%;">Classic Leather</div>
<div class="t" style="left:1067.0px;top:9.6px;font-size:10.6px;line-height:16px;color:#222;transform:scaleX(1.040);transform-origin:0 50%;">Buckle Strap</div>
<div class="t" style="left:1067.0px;top:21.2px;font-size:10.6px;line-height:16px;color:#222;transform:scaleX(1.040);transform-origin:0 50%;">Watch Wrist Band</div>
<div class="t" style="left:1067.0px;top:32.8px;font-size:10.6px;line-height:16px;color:#222;transform:scaleX(1.040);transform-origin:0 50%;">with Metal Clasp</div>
<div class="t" style="left:1067.0px;top:44.4px;font-size:10.6px;line-height:16px;color:#222;transform:scaleX(1.040);transform-origin:0 50%;">for 20mm Apple</div>
</div>
<div class="r" style="left:506.4px;top:186px;width:1px;height:600px;background:#e4e6e7;"></div>
<div class="r" style="left:636px;top:186px;width:1px;height:600px;background:#e4e6e7;"></div>
<div class="r" style="left:736px;top:186px;width:1px;height:600px;background:#e4e6e7;"></div>
<div class="r" style="left:811px;top:186px;width:1px;height:600px;background:#e4e6e7;"></div>
<div class="r" style="left:901px;top:186px;width:1px;height:600px;background:#e4e6e7;"></div>
<div class="r" style="left:991px;top:186px;width:1px;height:600px;background:#e4e6e7;"></div>
<div class="r" style="left:1061px;top:186px;width:1px;height:600px;background:#e4e6e7;"></div>
<div class="r" style="left:1161px;top:186px;width:1px;height:600px;background:#e4e6e7;"></div>
<div class="r" style="left:1231px;top:186px;width:1px;height:600px;background:#e4e6e7;"></div>
<div class="r" style="left:1281px;top:186px;width:1px;height:600px;background:#e4e6e7;"></div>
<div class="r" style="left:1351px;top:186px;width:1px;height:600px;background:#e4e6e7;"></div>
<div class="r" style="left:1421px;top:186px;width:1px;height:600px;background:#e4e6e7;"></div>
<div class="r" style="left:1491px;top:186px;width:1px;height:600px;background:#e4e6e7;"></div>
<div class="r" style="left:1561px;top:186px;width:1px;height:600px;background:#e4e6e7;"></div>
<div class="r" style="left:1641px;top:186px;width:1px;height:600px;background:#e4e6e7;"></div>
<div class="r" style="left:1711px;top:186px;width:1px;height:600px;background:#e4e6e7;"></div>
<div class="r" style="left:1781px;top:186px;width:1px;height:600px;background:#e4e6e7;"></div>
<div class="r" style="left:476.4px;top:186px;width:1px;height:600px;background:#e4e6e7;"></div>
<div class="r" style="left:477px;top:268.8px;width:1427px;height:1.3px;background:#1a6fa8;"></div>
<div class="r" style="left:477px;top:288.8px;width:1427px;height:1.3px;background:#1a6fa8;"></div>
<div class="r" style="left:1908px;top:423px;width:5px;height:3px;background:#fff;"></div>
<svg style="left:1907px;top:215px" width="9" height="5"><path d="M0.500 4.500l4-4 4 4" fill="none" stroke="#e6e6e6" stroke-width="1"/></svg>
<div class="r" style="left:1907.5px;top:421px;width:7.5px;height:150px;background:#ebebeb;"></div>
<div class="r" style="left:1919px;top:68px;width:1px;height:52px;background:#3a3a3a;"></div>
<div class="r" style="left:1919px;top:120px;width:1px;height:75px;background:#dedede;"></div>
<div class="r" style="left:477px;top:786px;width:1427px;height:10px;background:#fbfbfb;"></div>
<div class="r" style="left:489px;top:788px;width:1245px;height:6px;background:#efefef;"></div>
<div class="r" style="left:477px;top:797px;width:1443px;height:1px;background:#e6e6e6;"></div>
<div class="r" style="left:10px;top:804px;width:1px;height:236px;background:#303030;"></div>
<div class="r" style="left:11px;top:804px;width:258px;height:174px;background:#424242;"></div>
<div class="r" style="left:11px;top:978px;width:258px;height:62px;background:#303030;"></div>
<div class="t" style="left:54.0px;top:810.0px;font-size:12.2px;line-height:16px;color:#f2f2f2;transform:scaleX(0.879);transform-origin:0 50%;">Users</div>
<div class="t" style="left:54.0px;top:840.0px;font-size:12.2px;line-height:16px;color:#f2f2f2;transform:scaleX(0.944);transform-origin:0 50%;">Device Settings</div>
<div class="t" style="left:54.0px;top:870.0px;font-size:12.2px;line-height:16px;color:#f2f2f2;transform:scaleX(0.973);transform-origin:0 50%;">Company Settings</div>
<div class="t" style="left:54.0px;top:900.0px;font-size:12.2px;line-height:16px;color:#f2f2f2;transform:scaleX(0.958);transform-origin:0 50%;">E-commerce Sync Settings</div>
<div class="t" style="left:54.0px;top:930.0px;font-size:12.2px;line-height:16px;color:#f2f2f2;transform:scaleX(0.965);transform-origin:0 50%;">Web Portal</div>
<div class="r" style="left:11px;top:922px;width:258px;height:1px;background:#343434;"></div>
<div class="r" style="left:11px;top:953px;width:258px;height:1px;background:#343434;"></div>
<svg style="left:19px;top:928px" width="20" height="20" viewBox="0 0 20 20"><g fill="none" stroke="#a9a9a9" stroke-width="1.400"><circle cx="10" cy="10" r="8.600"/><ellipse cx="10" cy="10" rx="3.800" ry="8.600"/><path d="M1.400 10h17.200M2.800 5.600h14.400M2.800 14.400h14.400"/></g></svg>
<svg style="left:20px;top:987px" width="20" height="20"><circle cx="10" cy="5.500" r="4.400" fill="#a9a9a9"/><path d="M1 19.500c0-5 4.800-6.600 9-6.600s9 1.600 9 6.600z" fill="#a9a9a9"/></svg>
<div class="t" style="left:51.0px;top:990.0px;font-size:12.2px;line-height:16px;color:#f2f2f2;transform:scaleX(0.966);transform-origin:0 50%;">test</div>
<div class="t" style="left:51.0px;top:1014.5px;font-size:11px;line-height:16px;color:#f2f2f2;transform:scaleX(0.934);transform-origin:0 50%;">Version 1.35.32.0</div>
<svg style="left:209px;top:988.500px" width="41.500" height="17.500" viewBox="0 0 44 21" preserveAspectRatio="none"><rect x="0.500" y="9" width="13.500" height="11" rx="1.500" fill="#fff"/><path d="M3.500 9.500V6a3.700 3.700 0 0 1 7.400 0v3.500" fill="none" stroke="#fff" stroke-width="2.200"/><circle cx="7.200" cy="13.300" r="1.700" fill="#303030"/><rect x="6.400" y="13.500" width="1.600" height="4" fill="#303030"/><path d="M32.500 3.200h-7v15h7" fill="none" stroke="#fff" stroke-width="2.200"/><path d="M29.500 10.700h10" stroke="#fff" stroke-width="2.600"/><path d="M37 5l6 5.700-6 5.700z" fill="#fff"/></svg>
<div class="r" style="left:269px;top:804px;width:199px;height:236px;background:#e6e6e6;"></div>
<div class="t" style="left:279.0px;top:823.0px;font-size:14px;line-height:16px;color:#1e1e1e;transform:scaleX(0.948);transform-origin:0 50%;-webkit-text-stroke:0.250px #1e1e1e;">Packaging</div>
<div class="r" style="left:280.3px;top:852.6px;width:17.8px;height:16.8px;box-sizing:border-box;border:solid #07619c;border-width:2px 2px;border-radius:2.500px;background:transparent;"></div>
<div class="t" style="left:308.0px;top:853.0px;font-size:12.2px;line-height:16px;color:#2a2a2a;transform:scaleX(0.932);transform-origin:0 50%;">Single Package</div>
<div class="r" style="left:280.3px;top:877.6px;width:17.8px;height:16.8px;box-sizing:border-box;border:solid #07619c;border-width:2px 2px;border-radius:2.500px;background:transparent;"></div>
<div class="t" style="left:308.0px;top:878.0px;font-size:12.2px;line-height:16px;color:#2a2a2a;transform:scaleX(0.976);transform-origin:0 50%;">Multiply Package</div>
<div class="t" style="left:279.0px;top:907.0px;font-size:12.2px;line-height:16px;color:#6e6e6e;transform:scaleX(0.926);transform-origin:0 50%;">Order Date:</div>
<div class="r" style="left:279px;top:926px;width:163px;height:24px;background:#fff;border-radius:2px;"></div>
<div class="t" style="left:284.0px;top:930.5px;font-size:12.2px;line-height:16px;color:#b9b9b9;transform:scaleX(0.969);transform-origin:0 50%;">Select order date</div>
<svg style="left:427px;top:930px" width="14.0" height="15.99" viewBox="0 0 14 13" preserveAspectRatio="none"><path d="M1 2.500h12v10H1z" fill="none" stroke="#6b6b6b" stroke-width="1.300"/><path d="M1 2h12v3H1z M3.500 0.300v2.500 M10.500 0.300v2.500" stroke="#6b6b6b" stroke-width="1.300" fill="#6b6b6b"/><path d="M3.500 8h1.500M6.300 8h1.500M9 8h1.500" stroke="#6b6b6b" stroke-width="1.400"/></svg>
<div class="t" style="left:279.0px;top:959.0px;font-size:12.2px;line-height:16px;color:#6e6e6e;transform:scaleX(0.939);transform-origin:0 50%;">Order #:</div>
<div class="r" style="left:279px;top:979px;width:163px;height:23.5px;background:#fff;border:1px solid #ededed;box-sizing:border-box;border-radius:2px;"></div>
<div class="t" style="left:285.0px;top:982.5px;font-size:12.2px;line-height:16px;color:#b9b9b9;transform:scaleX(0.967);transform-origin:0 50%;">Order #</div>
<div class="t" style="left:279.0px;top:1012.0px;font-size:12.2px;line-height:16px;color:#6e6e6e;transform:scaleX(0.875);transform-origin:0 50%;">SHO #:</div>
<div class="r" style="left:279px;top:1032px;width:163px;height:9px;background:#fff;border-radius:2px;"></div>
<div class="t" style="left:285.0px;top:1036.0px;font-size:12.2px;line-height:16px;color:#b9b9b9;transform:scaleX(0.929);transform-origin:0 50%;">SHO #</div>
<svg style="left:456px;top:1030px" width="8" height="5"><path d="M0.500 0.500l3.500 3.500 3.500-3.500" fill="none" stroke="#d6d6d6" stroke-width="1"/></svg>
<div class="r" style="left:469px;top:803px;width:1451px;height:237px;background:#fff;"></div>
<div class="r" style="left:467.3px;top:803px;width:1.2px;height:237px;background:#4a4a4a;"></div>
<div class="clip" style="left:0;top:0;width:1920px;height:1016px">
<div class="r" style="left:478.2px;top:804.2px;width:1427px;height:24.799999999999955px;background:#fff;"></div>
<div class="r" style="left:484.2px;top:808.6px;width:18px;height:17px;box-sizing:border-box;border:solid #07619c;border-width:2px 2px;border-radius:2.500px;background:#fff;"></div>
<div class="t" style="left:515.2px;top:808.6px;font-size:12.2px;line-height:16px;color:#2e2e2e;transform:scaleX(0.969);transform-origin:0 50%;">09/01/2021 06:49 PM</div>
<div class="t" style="left:643.2px;top:808.6px;font-size:12.2px;line-height:16px;color:#2e2e2e;transform:scaleX(0.920);transform-origin:0 50%;">0021test, Ares</div>
<div class="t" style="left:743.2px;top:808.6px;font-size:12.2px;line-height:16px;color:#1a6fa8;transform:scaleX(0.896);transform-origin:0 50%;">SO-0046964</div>
<div class="t" style="left:818.2px;top:808.6px;font-size:12.2px;line-height:16px;color:#1a6fa8;transform:scaleX(0.904);transform-origin:0 50%;">SHO-0046964</div>
<svg style="left:998.3px;top:810.6px" width="12.0" height="12.0" viewBox="0 0 12 12" preserveAspectRatio="none"><rect x="0" y="0.500" width="12" height="11" rx="1.200" fill="#1a6fa8"/><path d="M1.500 9.800l2.800-3.600 2.100 2.500 1.500-1.700 2.600 2.800z" fill="#fff"/></svg>
<div class="t" style="left:1016.2px;top:808.6px;font-size:12.2px;line-height:16px;color:#1a6fa8;transform:scaleX(0.885);transform-origin:0 50%;">000</div>
<div class="t" style="left:1168.2px;top:808.6px;font-size:12.2px;line-height:16px;color:#2e2e2e;transform:scaleX(0.885);transform-origin:0 50%;">1</div>
<div class="t" style="left:1430.2px;top:808.6px;font-size:12.2px;line-height:16px;color:#2e2e2e;transform:scaleX(0.885);transform-origin:0 50%;">0</div>
<div class="t" style="left:1788.2px;top:808.6px;font-size:12.2px;line-height:16px;color:#2b95e2;transform:scaleX(0.933);transform-origin:0 50%;">Ready to Ship</div>
<div class="r" style="left:478.2px;top:829.0px;width:1427px;height:24.799999999999955px;background:#eaf2f6;"></div>
<div class="r" style="left:484.2px;top:833.4px;width:18px;height:17px;box-sizing:border-box;border:solid #07619c;border-width:2px 2px;border-radius:2.500px;background:#eaf2f6;"></div>
<div class="t" style="left:515.2px;top:833.4px;font-size:12.2px;line-height:16px;color:#2e2e2e;transform:scaleX(0.969);transform-origin:0 50%;">09/02/2021 03:08 PM</div>
<div class="t" style="left:643.2px;top:833.4px;font-size:12.2px;line-height:16px;color:#2e2e2e;transform:scaleX(0.920);transform-origin:0 50%;">0</div>
<div class="t" style="left:743.2px;top:833.4px;font-size:12.2px;line-height:16px;color:#1a6fa8;transform:scaleX(0.896);transform-origin:0 50%;">SO-0047039</div>
<div class="t" style="left:818.2px;top:833.4px;font-size:12.2px;line-height:16px;color:#1a6fa8;transform:scaleX(0.904);transform-origin:0 50%;">SHO-0047039</div>
<svg style="left:998.3px;top:835.4px" width="12.0" height="12.0" viewBox="0 0 12 12" preserveAspectRatio="none"><rect x="0" y="0.500" width="12" height="11" rx="1.200" fill="#1a6fa8"/><path d="M1.500 9.800l2.800-3.600 2.100 2.500 1.500-1.700 2.600 2.800z" fill="#fff"/></svg>
<div class="t" style="left:1016.2px;top:833.4px;font-size:12.2px;line-height:16px;color:#1a6fa8;transform:scaleX(0.885);transform-origin:0 50%;">000</div>
<div class="t" style="left:1168.2px;top:833.4px;font-size:12.2px;line-height:16px;color:#2e2e2e;transform:scaleX(0.885);transform-origin:0 50%;">1</div>
<div class="t" style="left:1430.2px;top:833.4px;font-size:12.2px;line-height:16px;color:#2e2e2e;transform:scaleX(0.885);transform-origin:0 50%;">0</div>
<div class="t" style="left:1788.2px;top:833.4px;font-size:12.2px;line-height:16px;color:#2b95e2;transform:scaleX(0.933);transform-origin:0 50%;">Ready to Ship</div>
<div class="r" style="left:478.2px;top:853.8px;width:1427px;height:25.40000000000009px;background:#fff;"></div>
<div class="r" style="left:484.2px;top:858.5px;width:18px;height:17px;box-sizing:border-box;border:solid #07619c;border-width:2px 2px;border-radius:2.500px;background:#fff;"></div>
<div class="t" style="left:515.2px;top:858.5px;font-size:12.2px;line-height:16px;color:#2e2e2e;transform:scaleX(0.984);transform-origin:0 50%;">11/11/2021 05:43 PM</div>
<div class="t" style="left:643.2px;top:858.5px;font-size:12.2px;line-height:16px;color:#2e2e2e;transform:scaleX(0.920);transform-origin:0 50%;">00d</div>
<div class="t" style="left:743.2px;top:858.5px;font-size:12.2px;line-height:16px;color:#1a6fa8;transform:scaleX(0.896);transform-origin:0 50%;">SO-0048615</div>
<div class="t" style="left:818.2px;top:858.5px;font-size:12.2px;line-height:16px;color:#1a6fa8;transform:scaleX(0.904);transform-origin:0 50%;">SHO-0048615</div>
<svg style="left:998.3px;top:860.5px" width="12.0" height="12.0" viewBox="0 0 12 12" preserveAspectRatio="none"><rect x="0" y="0.500" width="12" height="11" rx="1.200" fill="#1a6fa8"/><path d="M1.500 9.800l2.800-3.600 2.100 2.500 1.500-1.700 2.600 2.800z" fill="#fff"/></svg>
<div class="t" style="left:1016.2px;top:858.5px;font-size:12.2px;line-height:16px;color:#1a6fa8;transform:scaleX(0.885);transform-origin:0 50%;">000</div>
<div class="t" style="left:1168.2px;top:858.5px;font-size:12.2px;line-height:16px;color:#2e2e2e;transform:scaleX(0.885);transform-origin:0 50%;">3</div>
<div class="t" style="left:1430.2px;top:858.5px;font-size:12.2px;line-height:16px;color:#2e2e2e;transform:scaleX(0.885);transform-origin:0 50%;">0</div>
<div class="t" style="left:1788.2px;top:858.5px;font-size:12.2px;line-height:16px;color:#2b95e2;transform:scaleX(0.933);transform-origin:0 50%;">Ready to Ship</div>
<div class="r" style="left:478.2px;top:879.2px;width:1427px;height:26.799999999999955px;background:#e1ebf3;"></div>
<div class="r" style="left:484.2px;top:884.6px;width:18px;height:17px;background:#07619c;border-radius:2px;"></div>
<svg style="left:484.2px;top:884.6px" width="18" height="17" viewBox="0 0 18 14" preserveAspectRatio="none"><path d="M3 7l4 3.600 8.300-7" fill="none" stroke="#fff" stroke-width="1.400"/></svg>
<div class="t" style="left:515.2px;top:884.6px;font-size:12.2px;line-height:16px;color:#2e2e2e;transform:scaleX(0.976);transform-origin:0 50%;">11/16/2021 07:26 PM</div>
<div class="t" style="left:643.2px;top:884.6px;font-size:12.2px;line-height:16px;color:#2e2e2e;transform:scaleX(0.920);transform-origin:0 50%;">739 Park Ave</div>
<div class="t" style="left:743.2px;top:884.6px;font-size:12.2px;line-height:16px;color:#1a6fa8;transform:scaleX(0.896);transform-origin:0 50%;">SO-0048750</div>
<div class="t" style="left:818.2px;top:884.6px;font-size:12.2px;line-height:16px;color:#1a6fa8;transform:scaleX(0.904);transform-origin:0 50%;">SHO-0048750</div>
<svg style="left:998.3px;top:886.6px" width="12.0" height="12.0" viewBox="0 0 12 12" preserveAspectRatio="none"><rect x="0" y="0.500" width="12" height="11" rx="1.200" fill="#1a6fa8"/><path d="M1.500 9.800l2.800-3.600 2.100 2.500 1.500-1.700 2.600 2.800z" fill="#fff"/></svg>
<div class="t" style="left:1016.2px;top:884.6px;font-size:12.2px;line-height:16px;color:#1a6fa8;transform:scaleX(0.885);transform-origin:0 50%;">000</div>
<div class="t" style="left:1168.2px;top:884.6px;font-size:12.2px;line-height:16px;color:#2e2e2e;transform:scaleX(0.885);transform-origin:0 50%;">2</div>
<div class="t" style="left:1358.2px;top:884.6px;font-size:12.2px;line-height:16px;color:#23386b;transform:scaleX(0.885);transform-origin:0 50%;">FedEx</div>
<div class="t" style="left:1430.2px;top:884.6px;font-size:12.2px;line-height:16px;color:#2e2e2e;transform:scaleX(0.885);transform-origin:0 50%;">10</div>
<div class="t" style="left:1498.2px;top:884.6px;font-size:12.2px;line-height:16px;color:#2e2e2e;transform:scaleX(0.885);transform-origin:0 50%;">1 Box 2</div>
<div class="t" style="left:1648.2px;top:884.6px;font-size:12.2px;line-height:16px;color:#2e2e2e;transform:scaleX(0.885);transform-origin:0 50%;">FedEx 2...</div>
<div class="t" style="left:1788.2px;top:884.6px;font-size:12.2px;line-height:16px;color:#2b95e2;transform:scaleX(0.933);transform-origin:0 50%;">Ready to Ship</div>
<div class="r" style="left:478.2px;top:906.0px;width:1427px;height:25.0px;background:#fff;"></div>
<div class="r" style="left:484.2px;top:910.5px;width:18px;height:17px;box-sizing:border-box;border:solid #07619c;border-width:2px 2px;border-radius:2.500px;background:#fff;"></div>
<div class="t" style="left:515.2px;top:910.5px;font-size:12.2px;line-height:16px;color:#2e2e2e;transform:scaleX(0.969);transform-origin:0 50%;">07/20/2021 04:10 PM</div>
<div class="t" style="left:643.2px;top:910.5px;font-size:12.2px;line-height:16px;color:#2e2e2e;transform:scaleX(0.920);transform-origin:0 50%;">01test</div>
<div class="t" style="left:743.2px;top:910.5px;font-size:12.2px;line-height:16px;color:#1a6fa8;transform:scaleX(0.896);transform-origin:0 50%;">SO-0045733</div>
<div class="t" style="left:818.2px;top:910.5px;font-size:12.2px;line-height:16px;color:#1a6fa8;transform:scaleX(0.904);transform-origin:0 50%;">SHO-0045733</div>
<svg style="left:998.3px;top:912.5px" width="12.0" height="12.0" viewBox="0 0 12 12" preserveAspectRatio="none"><rect x="0" y="0.500" width="12" height="11" rx="1.200" fill="#1a6fa8"/><path d="M1.500 9.800l2.800-3.600 2.100 2.500 1.500-1.700 2.600 2.800z" fill="#fff"/></svg>
<div class="t" style="left:1016.2px;top:910.5px;font-size:12.2px;line-height:16px;color:#1a6fa8;transform:scaleX(0.885);transform-origin:0 50%;">0000</div>
<div class="t" style="left:1168.2px;top:910.5px;font-size:12.2px;line-height:16px;color:#2e2e2e;transform:scaleX(0.885);transform-origin:0 50%;">30</div>
<div class="t" style="left:1430.2px;top:910.5px;font-size:12.2px;line-height:16px;color:#2e2e2e;transform:scaleX(0.885);transform-origin:0 50%;">0</div>
<div class="t" style="left:1788.2px;top:910.5px;font-size:12.2px;line-height:16px;color:#2b95e2;transform:scaleX(0.933);transform-origin:0 50%;">Ready to Ship</div>
<div class="r" style="left:478.2px;top:931.0px;width:1427px;height:25.0px;background:#eaf2f6;"></div>
<div class="r" style="left:484.2px;top:935.5px;width:18px;height:17px;box-sizing:border-box;border:solid #07619c;border-width:2px 2px;border-radius:2.500px;background:#eaf2f6;"></div>
<div class="t" style="left:515.2px;top:935.5px;font-size:12.2px;line-height:16px;color:#2e2e2e;transform:scaleX(0.974);transform-origin:0 50%;">07/27/2021 09:01 AM</div>
<div class="t" style="left:643.2px;top:935.5px;font-size:12.2px;line-height:16px;color:#2e2e2e;transform:scaleX(0.920);transform-origin:0 50%;">02katetest</div>
<div class="t" style="left:743.2px;top:935.5px;font-size:12.2px;line-height:16px;color:#1a6fa8;transform:scaleX(0.896);transform-origin:0 50%;">SO-0045975</div>
<div class="t" style="left:818.2px;top:935.5px;font-size:12.2px;line-height:16px;color:#1a6fa8;transform:scaleX(0.915);transform-origin:0 50%;">SHO-0045975-1</div>
<svg style="left:998.3px;top:937.5px" width="12.0" height="12.0" viewBox="0 0 12 12" preserveAspectRatio="none"><rect x="0" y="0.500" width="12" height="11" rx="1.200" fill="#1a6fa8"/><path d="M1.500 9.800l2.800-3.600 2.100 2.500 1.500-1.700 2.600 2.800z" fill="#fff"/></svg>
<div class="t" style="left:1016.2px;top:935.5px;font-size:12.2px;line-height:16px;color:#1a6fa8;transform:scaleX(0.885);transform-origin:0 50%;">0000</div>
<div class="t" style="left:1168.2px;top:935.5px;font-size:12.2px;line-height:16px;color:#2e2e2e;transform:scaleX(0.885);transform-origin:0 50%;">1</div>
<div class="t" style="left:1430.2px;top:935.5px;font-size:12.2px;line-height:16px;color:#2e2e2e;transform:scaleX(0.885);transform-origin:0 50%;">0</div>
<div class="t" style="left:1788.2px;top:935.5px;font-size:12.2px;line-height:16px;color:#2b95e2;transform:scaleX(0.933);transform-origin:0 50%;">Ready to Ship</div>
<div class="r" style="left:478.2px;top:956.0px;width:1427px;height:25.200000000000045px;background:#fff;"></div>
<div class="r" style="left:484.2px;top:960.6px;width:18px;height:17px;box-sizing:border-box;border:solid #07619c;border-width:2px 2px;border-radius:2.500px;background:#fff;"></div>
<div class="t" style="left:515.2px;top:960.6px;font-size:12.2px;line-height:16px;color:#2e2e2e;transform:scaleX(0.974);transform-origin:0 50%;">07/27/2021 10:20 AM</div>
<div class="t" style="left:643.2px;top:960.6px;font-size:12.2px;line-height:16px;color:#2e2e2e;transform:scaleX(0.920);transform-origin:0 50%;">01test</div>
<div class="t" style="left:743.2px;top:960.6px;font-size:12.2px;line-height:16px;color:#1a6fa8;transform:scaleX(0.896);transform-origin:0 50%;">SO-0045979</div>
<div class="t" style="left:818.2px;top:960.6px;font-size:12.2px;line-height:16px;color:#1a6fa8;transform:scaleX(0.904);transform-origin:0 50%;">SHO-0045979</div>
<svg style="left:998.3px;top:962.6px" width="12.0" height="12.0" viewBox="0 0 12 12" preserveAspectRatio="none"><rect x="0" y="0.500" width="12" height="11" rx="1.200" fill="#1a6fa8"/><path d="M1.500 9.800l2.800-3.600 2.100 2.500 1.500-1.700 2.600 2.800z" fill="#fff"/></svg>
<div class="t" style="left:1016.2px;top:960.6px;font-size:12.2px;line-height:16px;color:#1a6fa8;transform:scaleX(0.885);transform-origin:0 50%;">0000</div>
<div class="t" style="left:1168.2px;top:960.6px;font-size:12.2px;line-height:16px;color:#2e2e2e;transform:scaleX(0.885);transform-origin:0 50%;">1</div>
<div class="t" style="left:1430.2px;top:960.6px;font-size:12.2px;line-height:16px;color:#2e2e2e;transform:scaleX(0.885);transform-origin:0 50%;">0</div>
<div class="t" style="left:1788.2px;top:960.6px;font-size:12.2px;line-height:16px;color:#2b95e2;transform:scaleX(0.933);transform-origin:0 50%;">Ready to Ship</div>
<div class="r" style="left:478.2px;top:981.2px;width:1427px;height:25.0px;background:#eaf2f6;"></div>
<div class="r" style="left:484.2px;top:985.7px;width:18px;height:17px;box-sizing:border-box;border:solid #07619c;border-width:2px 2px;border-radius:2.500px;background:#eaf2f6;"></div>
<div class="t" style="left:515.2px;top:985.7px;font-size:12.2px;line-height:16px;color:#2e2e2e;transform:scaleX(0.974);transform-origin:0 50%;">09/02/2021 10:31 AM</div>
<div class="t" style="left:643.2px;top:985.7px;font-size:12.2px;line-height:16px;color:#2e2e2e;transform:scaleX(0.920);transform-origin:0 50%;">0</div>
<div class="t" style="left:743.2px;top:985.7px;font-size:12.2px;line-height:16px;color:#1a6fa8;transform:scaleX(0.896);transform-origin:0 50%;">SO-0047007</div>
<div class="t" style="left:818.2px;top:985.7px;font-size:12.2px;line-height:16px;color:#1a6fa8;transform:scaleX(0.904);transform-origin:0 50%;">SHO-0047007</div>
<svg style="left:998.3px;top:987.7px" width="12.0" height="12.0" viewBox="0 0 12 12" preserveAspectRatio="none"><rect x="0" y="0.500" width="12" height="11" rx="1.200" fill="#1a6fa8"/><path d="M1.500 9.800l2.800-3.600 2.100 2.500 1.500-1.700 2.600 2.800z" fill="#fff"/></svg>
<div class="t" style="left:1016.2px;top:985.7px;font-size:12.2px;line-height:16px;color:#1a6fa8;transform:scaleX(0.885);transform-origin:0 50%;">0000</div>
<div class="t" style="left:1168.2px;top:985.7px;font-size:12.2px;line-height:16px;color:#2e2e2e;transform:scaleX(0.885);transform-origin:0 50%;">1</div>
<div class="t" style="left:1430.2px;top:985.7px;font-size:12.2px;line-height:16px;color:#2e2e2e;transform:scaleX(0.885);transform-origin:0 50%;">0</div>
<div class="t" style="left:1788.2px;top:985.7px;font-size:12.2px;line-height:16px;color:#2b95e2;transform:scaleX(0.933);transform-origin:0 50%;">Ready to Ship</div>
<div class="r" style="left:478.2px;top:1006.2px;width:1427px;height:25.200000000000045px;background:#fff;"></div>
<div class="r" style="left:484.2px;top:1010.8000000000001px;width:18px;height:17px;box-sizing:border-box;border:solid #07619c;border-width:2px 2px;border-radius:2.500px;background:#fff;"></div>
<div class="t" style="left:515.2px;top:1010.8px;font-size:12.2px;line-height:16px;color:#2e2e2e;transform:scaleX(0.974);transform-origin:0 50%;">09/02/2021 10:45 AM</div>
<div class="t" style="left:643.2px;top:1010.8px;font-size:12.2px;line-height:16px;color:#2e2e2e;transform:scaleX(0.920);transform-origin:0 50%;">0</div>
<div class="t" style="left:743.2px;top:1010.8px;font-size:12.2px;line-height:16px;color:#1a6fa8;transform:scaleX(0.896);transform-origin:0 50%;">SO-0047008</div>
<div class="t" style="left:818.2px;top:1010.8px;font-size:12.2px;line-height:16px;color:#1a6fa8;transform:scaleX(0.904);transform-origin:0 50%;">SHO-0047008</div>
<svg style="left:998.3px;top:1012.8000000000001px" width="12.0" height="12.0" viewBox="0 0 12 12" preserveAspectRatio="none"><rect x="0" y="0.500" width="12" height="11" rx="1.200" fill="#1a6fa8"/><path d="M1.500 9.800l2.800-3.600 2.100 2.500 1.500-1.700 2.600 2.800z" fill="#fff"/></svg>
<div class="t" style="left:1016.2px;top:1010.8px;font-size:12.2px;line-height:16px;color:#1a6fa8;transform:scaleX(0.885);transform-origin:0 50%;">0000</div>
<div class="t" style="left:1168.2px;top:1010.8px;font-size:12.2px;line-height:16px;color:#2e2e2e;transform:scaleX(0.885);transform-origin:0 50%;">1</div>
<div class="t" style="left:1430.2px;top:1010.8px;font-size:12.2px;line-height:16px;color:#2e2e2e;transform:scaleX(0.885);transform-origin:0 50%;">0</div>
<div class="t" style="left:1788.2px;top:1010.8px;font-size:12.2px;line-height:16px;color:#2b95e2;transform:scaleX(0.933);transform-origin:0 50%;">Ready to Ship</div>
<div class="r" style="left:508.2px;top:804px;width:1px;height:236px;background:#e4e6e7;"></div>
<div class="r" style="left:637.2px;top:804px;width:1px;height:236px;background:#e4e6e7;"></div>
<div class="r" style="left:737.2px;top:804px;width:1px;height:236px;background:#e4e6e7;"></div>
<div class="r" style="left:812.2px;top:804px;width:1px;height:236px;background:#e4e6e7;"></div>
<div class="r" style="left:902.2px;top:804px;width:1px;height:236px;background:#e4e6e7;"></div>
<div class="r" style="left:992.2px;top:804px;width:1px;height:236px;background:#e4e6e7;"></div>
<div class="r" style="left:1062.2px;top:804px;width:1px;height:236px;background:#e4e6e7;"></div>
<div class="r" style="left:1162.2px;top:804px;width:1px;height:236px;background:#e4e6e7;"></div>
<div class="r" style="left:1232.2px;top:804px;width:1px;height:236px;background:#e4e6e7;"></div>
<div class="r" style="left:1282.2px;top:804px;width:1px;height:236px;background:#e4e6e7;"></div>
<div class="r" style="left:1352.2px;top:804px;width:1px;height:236px;background:#e4e6e7;"></div>
<div class="r" style="left:1422.2px;top:804px;width:1px;height:236px;background:#e4e6e7;"></div>
<div class="r" style="left:1492.2px;top:804px;width:1px;height:236px;background:#e4e6e7;"></div>
<div class="r" style="left:1562.2px;top:804px;width:1px;height:236px;background:#e4e6e7;"></div>
<div class="r" style="left:1642.2px;top:804px;width:1px;height:236px;background:#e4e6e7;"></div>
<div class="r" style="left:1712.2px;top:804px;width:1px;height:236px;background:#e4e6e7;"></div>
<div class="r" style="left:1782.2px;top:804px;width:1px;height:236px;background:#e4e6e7;"></div>
<div class="r" style="left:477.6px;top:804px;width:1px;height:236px;background:#e4e6e7;"></div>
<div class="r" style="left:478px;top:878.7px;width:1427px;height:1.5px;background:#1a6fa8;"></div>
<div class="r" style="left:478px;top:904.7px;width:1427px;height:1.5px;background:#1a6fa8;"></div>
</div>
<div class="r" style="left:478px;top:1016px;width:1427px;height:11px;background:#fbfbfb;"></div>
<div class="r" style="left:489px;top:1018.5px;width:1245px;height:6.5px;background:#efefef;"></div>
<div class="r" style="left:470px;top:1031px;width:1450px;height:1px;background:#e6e6e6;"></div>
<div class="r" style="left:477px;top:1016px;width:1px;height:15px;background:#e6e6e6;"></div>
<svg style="left:1905px;top:1006px" width="9" height="5"><path d="M0.500 0.500l4 4 4-4" fill="none" stroke="#e4e4e4" stroke-width="1"/></svg>
<div class="r" style="left:1386px;top:110.6px;width:252px;height:44.900000000000006px;box-sizing:border-box;border:solid #f9574a;border-width:3.3px 4px;filter:drop-shadow(2.500px 2px 1.300px rgba(0,0,0,0.85));"></div>
<div class="r" style="left:1415.2px;top:263px;width:87.0px;height:33.80000000000001px;box-sizing:border-box;border:solid #f9574a;border-width:3.3px 4px;filter:drop-shadow(2.500px 2px 1.300px rgba(0,0,0,0.85));"></div>
<div class="r" style="left:415px;top:863px;width:1470px;height:53px;box-sizing:border-box;border:solid #f9574a;border-width:4px 4px;filter:drop-shadow(2.500px 2.500px 1.300px rgba(0,0,0,0.9));"></div>
</div>
</body></html>
